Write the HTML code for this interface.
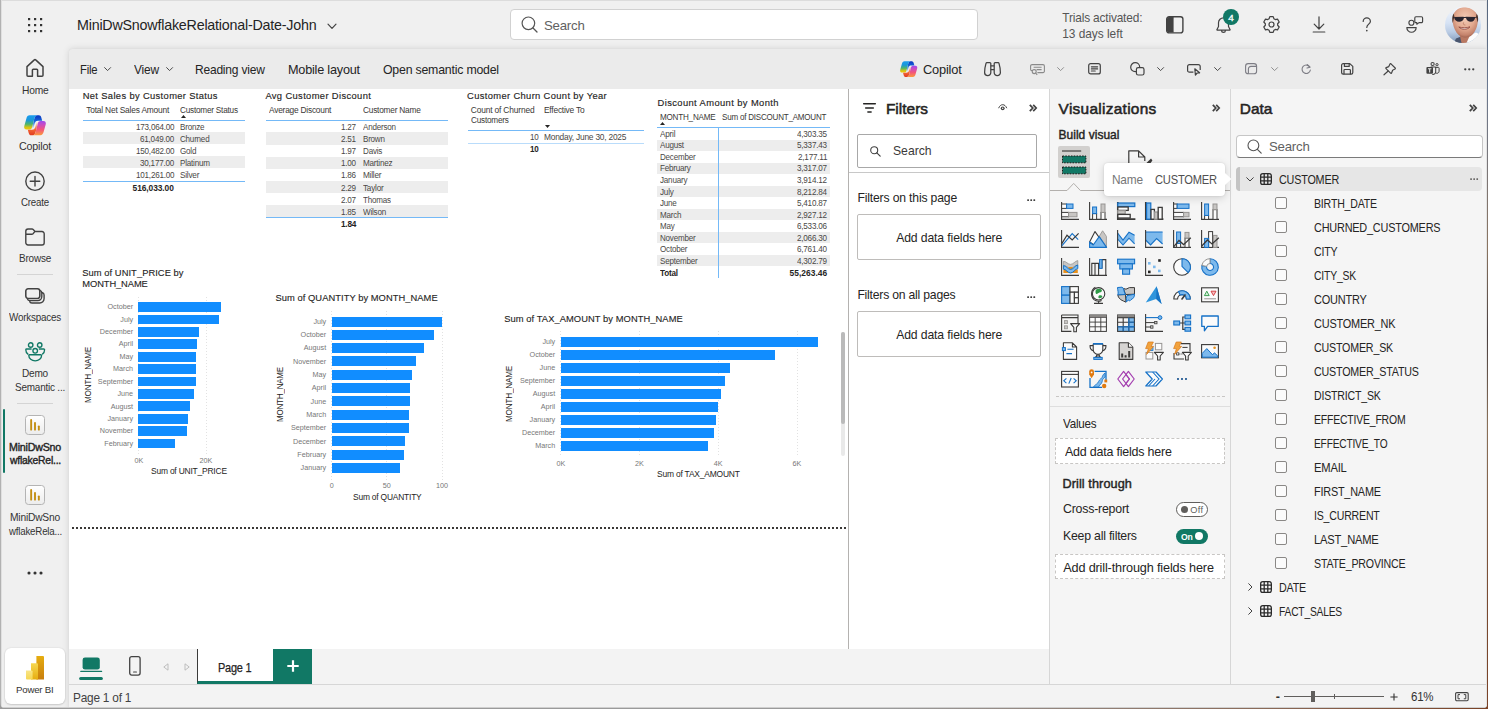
<!DOCTYPE html>
<html lang="en"><head><meta charset="utf-8"><title>Power BI</title>
<style>
*{box-sizing:border-box;margin:0;padding:0}
html,body{width:1488px;height:709px;overflow:hidden}
body{position:relative;background:#f0f0f0;font-family:"Liberation Sans","DejaVu Sans",sans-serif;color:#242424}
.abs{position:absolute}
svg{position:absolute;overflow:visible}

</style></head>
<body>
<!-- p_shell -->
<div class="abs" style="left:69px;top:49px;width:1419px;height:660px;background:#ebebeb;border-top-left-radius:3px;box-shadow:0 0 7px rgba(0,0,0,.13),0 0 1px rgba(0,0,0,.08)"></div>
<div class="abs" style="left:69px;top:89px;width:779px;height:559.7px;background:#fff"></div>
<div class="abs" style="left:847.9px;top:89px;width:1.3px;height:559.7px;background:#b4b2b0"></div>
<div class="abs" style="left:849px;top:89px;width:200px;height:559.7px;background:#fff"></div>
<div class="abs" style="left:1049px;top:89px;width:182px;height:595px;background:#f5f5f5;border-left:1px solid #d6d6d6;border-right:1px solid #d6d6d6"></div>
<div class="abs" style="left:1231px;top:89px;width:257px;height:595px;background:#f5f5f5"></div>
<div class="abs" style="left:69px;top:648.6px;width:980px;height:35.4px;background:#f3f3f3"></div>
<div class="abs" style="left:69px;top:684px;width:1419px;height:25px;background:#f3f3f3;border-top:1px solid #d6d6d6"></div>
<div class="abs" style="left:0;top:0;width:1488px;height:1px;background:#dcdcdc"></div>
<div class="abs" style="left:0;top:0;width:1px;height:709px;background:#b2b2b2"></div>
<div class="abs" style="left:1px;top:0;width:1px;height:709px;background:#e0e0e0"></div>
<div class="abs" style="left:1486px;top:0;width:1px;height:709px;background:#e4e4e4"></div>
<div class="abs" style="left:1487px;top:0;width:1px;height:709px;background:linear-gradient(to bottom,#56667c 0,#6a7890 12%,#8a7460 35%,#4a4040 47%,#8a7058 60%,#7a4a30 85%,#7a4226 100%)"></div>
<div class="abs" style="left:0;top:707px;width:1488px;height:1px;background:#cfcfcf"></div>
<div class="abs" style="left:0;top:708px;width:1488px;height:1px;background:linear-gradient(to right,#9a9a9a 0,#9a9a9a 60%,#8a6a58 85%,#7a4226 100%)"></div>
<!-- p_nav -->
<svg style="left:28px;top:18px" width="15" height="15" viewBox="0 0 15 15" ><rect x="0" y="0" width="2.2" height="2.2" fill="#333"/><rect x="0" y="6" width="2.2" height="2.2" fill="#333"/><rect x="0" y="12" width="2.2" height="2.2" fill="#333"/><rect x="6" y="0" width="2.2" height="2.2" fill="#333"/><rect x="6" y="6" width="2.2" height="2.2" fill="#333"/><rect x="6" y="12" width="2.2" height="2.2" fill="#333"/><rect x="12" y="0" width="2.2" height="2.2" fill="#333"/><rect x="12" y="6" width="2.2" height="2.2" fill="#333"/><rect x="12" y="12" width="2.2" height="2.2" fill="#333"/></svg>
<svg style="left:25px;top:58px" width="20" height="20" viewBox="0 0 20 20" ><path d="M2 8.6 L9.3 1.9 a1 1 0 0 1 1.4 0 L18 8.6 V17.2 a1 1 0 0 1 -1 1 H12.6 V12 a0.8 .8 0 0 0 -.8 -.8 H8.2 a.8 .8 0 0 0 -.8 .8 V18.2 H3 a1 1 0 0 1 -1 -1 Z" fill="none" stroke="#424242" stroke-width="1.5" stroke-linejoin="round"/></svg>
<span style="position:absolute;white-space:pre;left:21.75px;top:83.00px;font-size:10.72px;line-height:14px;color:#333;letter-spacing:-0.22px;transform:scaleX(0.9562);transform-origin:0 0;">Home</span>
<svg style="left:24px;top:114.7px" width="22" height="20.5" viewBox="0 0 22 20.5" ><defs><linearGradient id="cpa" x1="0" y1="0" x2="0" y2="1"><stop offset="0" stop-color="#1a9cf0"/><stop offset=".35" stop-color="#1a98d8"/><stop offset=".62" stop-color="#4fb56a"/><stop offset=".85" stop-color="#d8c412"/><stop offset="1" stop-color="#efc80a"/></linearGradient><linearGradient id="cpa2" x1="0" y1="0" x2="0" y2="1"><stop offset="0" stop-color="#0a34c0"/><stop offset=".45" stop-color="#1568dc"/><stop offset="1" stop-color="#ffffff"/></linearGradient><linearGradient id="cpb" x1="0" y1="0" x2="0" y2="1"><stop offset="0" stop-color="#fb9b3c"/><stop offset=".4" stop-color="#f3567a"/><stop offset=".75" stop-color="#c84cc4"/><stop offset="1" stop-color="#9d4af0"/></linearGradient><linearGradient id="cpb2" x1="0" y1="0" x2="0" y2="1"><stop offset="0" stop-color="#e03a20"/><stop offset=".45" stop-color="#f56a36"/><stop offset="1" stop-color="#ffffff"/></linearGradient></defs><path d="M10.3 3.8 C10.8 1.9 11.6 .2 13.4 .2 H14.8 C16.1 .2 16.9 1.1 17.3 2.5 L18.2 5.7 H14 C12.3 5.7 11.3 6.5 10.8 8.2 L9.4 13 C9.2 13.6 8.8 14.1 8.1 14.4 C8.4 13.8 8.4 13 8.1 12.3Z" fill="url(#cpa2)"/><path d="M5.6 .2 H13.4 C11.6 .4 10.8 1.9 10.3 3.8 L8.1 12.3 C7.7 13.9 6.8 14.6 5.4 14.6 H2.6 C.6 14.6 -.3 13.1 .3 11 L2.4 3.4 C2.9 1.4 3.9 .2 5.6 .2Z" fill="url(#cpa)"/><g transform="rotate(180 11 10.25)"><path d="M10.3 3.8 C10.8 1.9 11.6 .2 13.4 .2 H14.8 C16.1 .2 16.9 1.1 17.3 2.5 L18.2 5.7 H14 C12.3 5.7 11.3 6.5 10.8 8.2 L9.4 13 C9.2 13.6 8.8 14.1 8.1 14.4 C8.4 13.8 8.4 13 8.1 12.3Z" fill="url(#cpb2)"/><path d="M5.6 .2 H13.4 C11.6 .4 10.8 1.9 10.3 3.8 L8.1 12.3 C7.7 13.9 6.8 14.6 5.4 14.6 H2.6 C.6 14.6 -.3 13.1 .3 11 L2.4 3.4 C2.9 1.4 3.9 .2 5.6 .2Z" fill="url(#cpb)"/></g></svg>
<span style="position:absolute;white-space:pre;left:19.00px;top:139.00px;font-size:10.72px;line-height:14px;color:#333;letter-spacing:-0.196px;">Copilot</span>
<svg style="left:25px;top:171px" width="20" height="20" viewBox="0 0 20 20" ><circle cx="10" cy="10.2" r="9.2" fill="none" stroke="#424242" stroke-width="1.4"/><path d="M10 5.4 V15 M5.2 10.2 H14.8" stroke="#424242" stroke-width="1.4" stroke-linecap="round"/></svg>
<span style="position:absolute;white-space:pre;left:21.00px;top:195.00px;font-size:10.72px;line-height:14px;color:#333;letter-spacing:-0.22px;transform:scaleX(0.9071);transform-origin:0 0;">Create</span>
<svg style="left:25px;top:228px" width="20" height="18" viewBox="0 0 20 18" ><path d="M.8 3.2 a2.2 2.2 0 0 1 2.2 -2.2 H7 a1.6 1.6 0 0 1 1.2 .5 L9.6 3 a1.6 1.6 0 0 0 1.2 .5 H17 a2.2 2.2 0 0 1 2.2 2.2 V14.8 a2.2 2.2 0 0 1 -2.2 2.2 H3 a2.2 2.2 0 0 1 -2.2 -2.2 Z M.8 6.2 H6.8 a1.6 1.6 0 0 0 1.2 -.5 L9.8 3.6" fill="none" stroke="#424242" stroke-width="1.4" stroke-linejoin="round"/></svg>
<span style="position:absolute;white-space:pre;left:19.00px;top:251.00px;font-size:10.72px;line-height:14px;color:#333;letter-spacing:-0.22px;transform:scaleX(0.9294);transform-origin:0 0;">Browse</span>
<div class="abs" style="left:17px;top:274px;width:36px;height:1px;background:#d4d4d4"></div>
<svg style="left:25px;top:288px" width="21" height="16" viewBox="0 0 21 16" ><path d="M17.2 4.4 a2.6 2.6 0 0 1 1.9 2.5 V10.6 a4.4 4.4 0 0 1 -4.4 4.4 H7 a2.6 2.6 0 0 1 -2.5 -1.8 M15 2.4 a2.6 2.6 0 0 1 1.8 2.5 V8.6 a4 4 0 0 1 -4 4 H4.8 a2.6 2.6 0 0 1 -2.4 -1.6" fill="none" stroke="#424242" stroke-width="1.4"/><rect x=".8" y=".8" width="14" height="9.6" rx="2.3" fill="none" stroke="#424242" stroke-width="1.55"/></svg>
<span style="position:absolute;white-space:pre;left:9.00px;top:310.00px;font-size:10.72px;line-height:14px;color:#333;letter-spacing:-0.22px;transform:scaleX(0.9190);transform-origin:0 0;">Workspaces</span>
<svg style="left:25px;top:342px" width="21" height="20" viewBox="0 0 21 20" ><g fill="none" stroke="#117865" stroke-width="1.35"><circle cx="5.7" cy="3" r="2.25"/><circle cx="14.7" cy="3" r="2.25"/><circle cx="10.2" cy="8.8" r="2.3"/><path d="M4.6 12.7 h11.2 a.8 .8 0 0 1 .8 .8 a6.4 5.4 0 0 1 -12.8 0 a.8 .8 0 0 1 .8 -.8z"/><path d="M6.6 7 H1.6 a.8 .8 0 0 0 -.8 .8 a5.4 5.4 0 0 0 2.4 4.6 M13.8 7 H18.8 a.8 .8 0 0 1 .8 .8 a5.4 5.4 0 0 1 -2.4 4.6"/></g></svg>
<span style="position:absolute;white-space:pre;left:22.00px;top:366.00px;font-size:10.72px;line-height:14px;color:#333;letter-spacing:-0.22px;transform:scaleX(0.9382);transform-origin:0 0;">Demo</span>
<span style="position:absolute;white-space:pre;left:15.00px;top:380.00px;font-size:10.72px;line-height:14px;color:#333;letter-spacing:-0.22px;transform:scaleX(0.9267);transform-origin:0 0;">Semantic ...</span>
<div class="abs" style="left:17px;top:403px;width:36px;height:1px;background:#d4d4d4"></div>
<div class="abs" style="left:3px;top:409px;width:2.4px;height:64px;background:#117865;border-radius:1px"></div>
<svg style="left:25px;top:415px" width="20" height="20" viewBox="0 0 20 20" ><defs><linearGradient id="rg415" x1="0" y1="0" x2="0" y2="1"><stop offset="0" stop-color="#ffffff"/><stop offset="1" stop-color="#ececec"/></linearGradient></defs><rect x="0.5" y="0.5" width="19" height="19" rx="3" fill="url(#rg415)" stroke="#b4b4b4"/><rect x="5.2" y="4" width="1.9" height="11.6" rx=".9" fill="#c48f14"/><rect x="9.05" y="7" width="1.9" height="8.6" rx=".9" fill="#c48f14"/><rect x="12.9" y="10.4" width="1.9" height="5.2" rx=".9" fill="#c48f14"/></svg>
<span style="position:absolute;white-space:pre;left:9.00px;top:440.00px;font-size:10.72px;line-height:14px;-webkit-text-stroke:0.38px #242424;color:#242424;letter-spacing:-0.22px;transform:scaleX(0.9954);transform-origin:0 0;">MiniDwSno</span>
<span style="position:absolute;white-space:pre;left:9.50px;top:453.00px;font-size:10.72px;line-height:14px;-webkit-text-stroke:0.38px #242424;color:#242424;letter-spacing:-0.22px;transform:scaleX(0.9665);transform-origin:0 0;">wflakeRel...</span>
<svg style="left:25px;top:485px" width="20" height="20" viewBox="0 0 20 20" ><defs><linearGradient id="rg485" x1="0" y1="0" x2="0" y2="1"><stop offset="0" stop-color="#ffffff"/><stop offset="1" stop-color="#ececec"/></linearGradient></defs><rect x="0.5" y="0.5" width="19" height="19" rx="3" fill="url(#rg485)" stroke="#b4b4b4"/><rect x="5.2" y="4" width="1.9" height="11.6" rx=".9" fill="#c48f14"/><rect x="9.05" y="7" width="1.9" height="8.6" rx=".9" fill="#c48f14"/><rect x="12.9" y="10.4" width="1.9" height="5.2" rx=".9" fill="#c48f14"/></svg>
<span style="position:absolute;white-space:pre;left:10.00px;top:510.00px;font-size:10.72px;line-height:14px;color:#333;letter-spacing:-0.22px;transform:scaleX(0.9571);transform-origin:0 0;">MiniDwSno</span>
<span style="position:absolute;white-space:pre;left:8.50px;top:524.00px;font-size:10.72px;line-height:14px;color:#333;letter-spacing:-0.22px;transform:scaleX(0.9058);transform-origin:0 0;">wflakeRela...</span>
<svg style="left:27px;top:571px" width="16" height="4" viewBox="0 0 16 4" ><circle cx="2" cy="2" r="1.55" fill="#333"/><circle cx="8" cy="2" r="1.55" fill="#333"/><circle cx="14" cy="2" r="1.55" fill="#333"/></svg>
<div class="abs" style="left:5px;top:648px;width:60px;height:56px;background:#fff;border-radius:6px;box-shadow:0 0 2px rgba(0,0,0,.12),0 1px 2px rgba(0,0,0,.14)"></div>
<svg style="left:26px;top:656px" width="18" height="23.5" viewBox="0 0 18 23.5" ><defs><linearGradient id="pb1" x1="0" y1="0" x2="0" y2="1"><stop offset="0" stop-color="#e6ad10"/><stop offset="1" stop-color="#c87e0e"/></linearGradient><linearGradient id="pb2" x1="0" y1="0" x2="0" y2="1"><stop offset="0" stop-color="#f6d751"/><stop offset="1" stop-color="#e6ad10"/></linearGradient><linearGradient id="pb3" x1="0" y1="0" x2="0" y2="1"><stop offset="0" stop-color="#f9e589"/><stop offset="1" stop-color="#f6d751"/></linearGradient></defs><path d="M10.4 0 H17 a1 1 0 0 1 1 1 V23.5 H10.4z" fill="url(#pb1)"/><path d="M5 7.2 H11 a1 1 0 0 1 1 1 V23.5 H5z" fill="url(#pb2)"/><path d="M0 14.4 H5.6 a1 1 0 0 1 1 1 V23.5 H1 a1 1 0 0 1 -1 -1z" fill="url(#pb3)"/></svg>
<span style="position:absolute;white-space:pre;left:16.25px;top:683.00px;font-size:9.75px;line-height:13px;color:#333;letter-spacing:-0.22px;transform:scaleX(0.9920);transform-origin:0 0;">Power BI</span>
<!-- p_header -->
<span style="position:absolute;white-space:pre;left:77.30px;top:16.00px;font-size:14.33px;line-height:19px;color:#242424;letter-spacing:-0.22px;transform:scaleX(0.9980);transform-origin:0 0;">MiniDwSnowflakeRelational-Date-John</span>
<svg style="left:327px;top:22.5px" width="10" height="7" viewBox="0 0 10 7" ><path d="M1 1.2 L5 5.4 L9 1.2" fill="none" stroke="#424242" stroke-width="1.2" stroke-linecap="round" stroke-linejoin="round"/></svg>
<div class="abs" style="left:510px;top:9px;width:468px;height:31px;background:#fff;border:1px solid #d1d1d1;border-radius:4px"></div>
<svg style="left:521px;top:15.8px" width="17" height="17" viewBox="0 0 17 17" ><circle cx="7.4" cy="7.3" r="6.3" fill="none" stroke="#555" stroke-width="1.2"/><path d="M12 12 L16 16" stroke="#555" stroke-width="1.3" stroke-linecap="round"/></svg>
<span style="position:absolute;white-space:pre;left:544.40px;top:17.00px;font-size:13.65px;line-height:18px;color:#616161;letter-spacing:-0.22px;transform:scaleX(0.9686);transform-origin:0 0;">Search</span>
<span style="position:absolute;white-space:pre;left:1062.30px;top:11.00px;font-size:11.89px;line-height:15px;color:#555;letter-spacing:-0.160px;">Trials activated:</span>
<span style="position:absolute;white-space:pre;left:1062.30px;top:27.00px;font-size:11.89px;line-height:15px;color:#555;letter-spacing:-0.028px;">13 days left</span>
<svg style="left:1166.2px;top:16.2px" width="17.6" height="17.6" viewBox="0 0 17.6 17.6" ><rect x=".7" y=".7" width="16.2" height="16.2" rx="2.4" fill="none" stroke="#424242" stroke-width="1.4"/><path d="M1 3 a2 2 0 0 1 2 -2 H7.6 V16.6 H3 a2 2 0 0 1 -2 -2z" fill="#424242"/></svg>
<svg style="left:1215.6px;top:16.6px" width="15" height="17" viewBox="0 0 15 17" ><path d="M7.5 .8 a5 5 0 0 0 -5 5 V9.4 L1 12.4 a.5 .5 0 0 0 .45 .75 H13.55 a.5 .5 0 0 0 .45 -.75 L12.5 9.4 V5.8 a5 5 0 0 0 -5 -5z M5.6 13.4 a1.9 1.9 0 0 0 3.8 0" fill="none" stroke="#424242" stroke-width="1.2" stroke-linejoin="round"/></svg>
<div class="abs" style="left:1223.1px;top:9.2px;width:15.8px;height:15.8px;border-radius:50%;background:#117865"></div>
<span style="position:absolute;white-space:pre;left:1228.23px;top:11.00px;font-size:9.94px;line-height:13px;-webkit-text-stroke:0.35px #fff;color:#fff;">4</span>
<svg style="left:1262.5px;top:16.4px" width="17" height="17" viewBox="0 0 17 17" ><path d="M6.81 0.58 L10.19 0.58 L10.91 2.79 L12.24 3.55 L14.52 3.08 L16.20 6.00 L14.65 7.74 L14.65 9.26 L16.20 11.00 L14.52 13.92 L12.24 13.45 L10.91 14.21 L10.19 16.42 L6.81 16.42 L6.09 14.21 L4.76 13.45 L2.48 13.92 L0.80 11.00 L2.35 9.26 L2.35 7.74 L0.80 6.00 L2.48 3.08 L4.76 3.55 L6.09 2.79Z" fill="none" stroke="#424242" stroke-width="1.2" stroke-linejoin="round"/><circle cx="8.5" cy="8.5" r="2.5" fill="none" stroke="#424242" stroke-width="1.2"/></svg>
<svg style="left:1312px;top:16.4px" width="14" height="17" viewBox="0 0 14 17" ><path d="M7 .8 V12.6 M2.2 8.2 L7 13 L11.8 8.2 M1.2 16 H12.8" fill="none" stroke="#424242" stroke-width="1.2" stroke-linecap="round" stroke-linejoin="round"/></svg>
<svg style="left:1362.4px;top:17.4px" width="10" height="15" viewBox="0 0 10 15" ><path d="M1.2 4.4 a3.6 3.6 0 0 1 7.2 0 c0 2.6 -3.6 3 -3.6 6" fill="none" stroke="#424242" stroke-width="1.2" stroke-linecap="round"/><circle cx="4.8" cy="13.6" r=".85" fill="#424242"/></svg>
<svg style="left:1406.4px;top:16.4px" width="18" height="17.4" viewBox="0 0 18 17.4" ><g fill="none" stroke="#424242" stroke-width="1.15" stroke-linejoin="round"><circle cx="5.4" cy="6.8" r="2.5"/><path d="M.8 11.6 H10.2 a4.7 4.7 0 0 1 -9.4 0z"/><path d="M10 .8 H15.4 a1.2 1.2 0 0 1 1.2 1.2 V5.4 a1.2 1.2 0 0 1 -1.2 1.2 H13 L10.8 8.2 V6.6 H10 A1.2 1.2 0 0 1 8.8 5.4 V2 A1.2 1.2 0 0 1 10 .8z"/></g></svg>
<svg style="left:1445px;top:6.9px" width="36" height="36" viewBox="0 0 36 36" ><defs><clipPath id="avc"><circle cx="18" cy="18" r="18"/></clipPath><linearGradient id="avbg" x1="0" y1="0" x2="0" y2="1"><stop offset="0" stop-color="#f2f5fb"/><stop offset=".45" stop-color="#d5e2f4"/><stop offset=".7" stop-color="#b9cbe4"/><stop offset="1" stop-color="#8098b8"/></linearGradient><radialGradient id="avsk" cx=".5" cy=".36" r=".66"><stop offset="0" stop-color="#f3cbb6"/><stop offset=".55" stop-color="#e2a990"/><stop offset=".85" stop-color="#c4836c"/><stop offset="1" stop-color="#9a5c4a"/></radialGradient></defs><g clip-path="url(#avc)"><rect width="36" height="36" fill="url(#avbg)"/><path d="M9 36 L11 31.5 L16 29.5 L18 36z" fill="#4a566e"/><path d="M17 36 L21 30 L31 25.5 L36 28 V36z" fill="#fcfcfc"/><path d="M14.5 27 L16.5 36 L21.5 36 L25.5 27z" fill="#b87862"/><path d="M20.2 .3 C27 .3 33 5 32.9 12 C32.9 19 30.5 24.5 27.5 27.5 C25 30 22.5 30.7 19.6 30.5 C16.5 30.3 13.5 28.5 11.5 25.5 C9 21.5 7.5 17 7.5 12 C7.5 5 13 .3 20.2 .3Z" fill="url(#avsk)"/><path d="M8.6 6.6 C7 9.4 7 13.4 7.8 16 L9.4 9.4z M31.8 6.6 C33.4 9.4 33.4 13 32.8 15.4 L31 9.4z" fill="#4a342e"/><path d="M9 10 L18.4 9.7 C19 9.7 19 10.5 18.8 11.6 C18.4 13.7 16.8 14.7 14.2 14.7 C11.4 14.7 9.6 13.4 9 10z M20.6 9.7 L30.2 10 C30 13.2 28.4 14.7 25.8 14.7 C23.4 14.7 21.6 13.7 21.2 11.6 C21 10.5 20.4 9.7 20.6 9.7z M18.4 10 h2.6 v1 h-2.6z M7.6 10.6 L9 10 v1.1z M32.8 10.6 L30.2 10 v1.1z" fill="#2a2530"/><path d="M18.6 15.4 C18 17 18.4 18 20.4 18" stroke="#b9785f" stroke-width=".8" fill="none"/><path d="M13.8 20 C16.6 23 22.6 23 25 19.8 C22.4 21 16.8 21 13.8 20z" fill="#f6ecea" stroke="#8a3c34" stroke-width=".8" stroke-linejoin="round"/></g></svg>
<!-- p_toolbar -->
<span style="position:absolute;white-space:pre;left:80.20px;top:61.00px;font-size:13.16px;line-height:17px;color:#242424;letter-spacing:-0.22px;transform:scaleX(0.8562);transform-origin:0 0;">File</span>
<svg style="left:104.4px;top:67.3px" width="7.2" height="4.4" viewBox="0 0 7.2 4.4" ><path d="M.6 .6 L3.6 3.6 L6.6 .6" fill="none" stroke="#424242" stroke-width=".95" stroke-linecap="round" stroke-linejoin="round"/></svg>
<span style="position:absolute;white-space:pre;left:134.30px;top:61.00px;font-size:13.16px;line-height:17px;color:#242424;letter-spacing:-0.22px;transform:scaleX(0.9051);transform-origin:0 0;">View</span>
<svg style="left:165.6px;top:67.3px" width="7.2" height="4.4" viewBox="0 0 7.2 4.4" ><path d="M.6 .6 L3.6 3.6 L6.6 .6" fill="none" stroke="#424242" stroke-width=".95" stroke-linecap="round" stroke-linejoin="round"/></svg>
<span style="position:absolute;white-space:pre;left:195.40px;top:61.00px;font-size:13.16px;line-height:17px;color:#242424;letter-spacing:-0.22px;transform:scaleX(0.9117);transform-origin:0 0;">Reading view</span>
<span style="position:absolute;white-space:pre;left:287.80px;top:61.00px;font-size:13.16px;line-height:17px;color:#242424;letter-spacing:-0.22px;transform:scaleX(0.9629);transform-origin:0 0;">Mobile layout</span>
<span style="position:absolute;white-space:pre;left:382.60px;top:61.00px;font-size:13.16px;line-height:17px;color:#242424;letter-spacing:-0.22px;transform:scaleX(0.9362);transform-origin:0 0;">Open semantic model</span>
<svg style="left:899.5px;top:61.3px" width="17.4" height="16.21" viewBox="0 0 22 20.5"><path d="M10.3 3.8 C10.8 1.9 11.6 .2 13.4 .2 H14.8 C16.1 .2 16.9 1.1 17.3 2.5 L18.2 5.7 H14 C12.3 5.7 11.3 6.5 10.8 8.2 L9.4 13 C9.2 13.6 8.8 14.1 8.1 14.4 C8.4 13.8 8.4 13 8.1 12.3Z" fill="url(#cpa2)"/><path d="M5.6 .2 H13.4 C11.6 .4 10.8 1.9 10.3 3.8 L8.1 12.3 C7.7 13.9 6.8 14.6 5.4 14.6 H2.6 C.6 14.6 -.3 13.1 .3 11 L2.4 3.4 C2.9 1.4 3.9 .2 5.6 .2Z" fill="url(#cpa)"/><g transform="rotate(180 11 10.25)"><path d="M10.3 3.8 C10.8 1.9 11.6 .2 13.4 .2 H14.8 C16.1 .2 16.9 1.1 17.3 2.5 L18.2 5.7 H14 C12.3 5.7 11.3 6.5 10.8 8.2 L9.4 13 C9.2 13.6 8.8 14.1 8.1 14.4 C8.4 13.8 8.4 13 8.1 12.3Z" fill="url(#cpb2)"/><path d="M5.6 .2 H13.4 C11.6 .4 10.8 1.9 10.3 3.8 L8.1 12.3 C7.7 13.9 6.8 14.6 5.4 14.6 H2.6 C.6 14.6 -.3 13.1 .3 11 L2.4 3.4 C2.9 1.4 3.9 .2 5.6 .2Z" fill="url(#cpb)"/></g></svg>
<span style="position:absolute;white-space:pre;left:922.50px;top:61.00px;font-size:13.16px;line-height:17px;color:#242424;letter-spacing:-0.22px;transform:scaleX(0.9768);transform-origin:0 0;">Copilot</span>
<svg style="left:983.6px;top:61.8px" width="17" height="14.6" viewBox="0 0 17 14.6" ><g fill="none" stroke="#424242" stroke-width="1.25" stroke-linejoin="round"><path d="M2.9 .7 H5.9 a.9 .9 0 0 1 .9 .9 V10.6 a3.1 3.1 0 1 1 -6.2 0 C.6 7 1.2 4 2 1.4 a1 1 0 0 1 .9 -.7z"/><path d="M14.1 .7 H11.1 a.9 .9 0 0 0 -.9 .9 V10.6 a3.1 3.1 0 1 0 6.2 0 C16.4 7 15.8 4 15 1.4 a1 1 0 0 0 -.9 -.7z"/><path d="M6.8 4 H10.2 M6.8 7.6 H10.2"/></g></svg>
<svg style="left:1029.6px;top:64px" width="15" height="11.4" viewBox="0 0 15 11.4" ><g fill="none" stroke="#8a8a8a" stroke-width="1.1" stroke-linejoin="round"><path d="M2.2 6.6 H2 A1.4 1.4 0 0 1 .6 5.2 V2 A1.4 1.4 0 0 1 2 .6 H13 a1.4 1.4 0 0 1 1.4 1.4 V7.2 A1.4 1.4 0 0 1 13 8.6 H7.4"/><path d="M3.6 3.2 H11.6 M6.6 5.6 H11.6"/><circle cx="4.2" cy="7.6" r="2"/><path d="M5.7 9.1 L7.2 10.8"/></g></svg>
<svg style="left:1057.4px;top:67.3px" width="7.2" height="4.4" viewBox="0 0 7.2 4.4" ><path d="M.6 .6 L3.6 3.6 L6.6 .6" fill="none" stroke="#8a8a8a" stroke-width=".95" stroke-linecap="round" stroke-linejoin="round"/></svg>
<svg style="left:1087.5px;top:63.4px" width="13" height="11.6" viewBox="0 0 13 11.6" ><g fill="none" stroke="#424242" stroke-width="1.2" stroke-linecap="round"><rect x=".7" y=".7" width="11.6" height="10.2" rx="2"/><path d="M3.4 3.8 H9.6 M3.4 5.9 H9.6 M3.4 8 H7.2"/></g></svg>
<svg style="left:1129.8px;top:62.4px" width="14.8" height="13.6" viewBox="0 0 14.8 13.6" ><g fill="none" stroke="#424242" stroke-width="1.2"><circle cx="5.2" cy="5.2" r="4.5"/><rect x="6.4" y="5.6" width="7.6" height="7.4" rx="1.8" fill="#ebebeb"/></g></svg>
<svg style="left:1157.4px;top:67.3px" width="7.2" height="4.4" viewBox="0 0 7.2 4.4" ><path d="M.6 .6 L3.6 3.6 L6.6 .6" fill="none" stroke="#424242" stroke-width=".95" stroke-linecap="round" stroke-linejoin="round"/></svg>
<svg style="left:1187px;top:64px" width="14" height="11.6" viewBox="0 0 14 11.6" ><g fill="none" stroke="#424242" stroke-width="1.2" stroke-linejoin="round"><path d="M6.4 8.2 H2.4 A1.8 1.8 0 0 1 .6 6.4 V2.4 A1.8 1.8 0 0 1 2.4 .6 H11.4 a1.8 1.8 0 0 1 1.8 1.8 V6"/><path d="M7.8 4.8 L12.6 8.8 L10.2 9 L8.4 11z" fill="#ebebeb"/></g></svg>
<svg style="left:1214.4px;top:67.3px" width="7.2" height="4.4" viewBox="0 0 7.2 4.4" ><path d="M.6 .6 L3.6 3.6 L6.6 .6" fill="none" stroke="#424242" stroke-width=".95" stroke-linecap="round" stroke-linejoin="round"/></svg>
<svg style="left:1245px;top:63.4px" width="12.2" height="11.4" viewBox="0 0 12.2 11.4" ><g fill="none" stroke="#7c7c84" stroke-width="1.1"><rect x=".6" y=".6" width="11" height="10.2" rx="2.6"/><path d="M3.4 10.8 V6 a2.6 2.6 0 0 1 2.6 -2.6 H11.6"/></g></svg>
<svg style="left:1271.2px;top:67.3px" width="7.2" height="4.4" viewBox="0 0 7.2 4.4" ><path d="M.6 .6 L3.6 3.6 L6.6 .6" fill="none" stroke="#8a8a8a" stroke-width=".95" stroke-linecap="round" stroke-linejoin="round"/></svg>
<svg style="left:1300.8px;top:64.2px" width="10.4" height="9.8" viewBox="0 0 10.4 9.8" ><g fill="none" stroke="#7c7c84" stroke-width="1.1" stroke-linecap="round" stroke-linejoin="round"><path d="M8.8 3 A4.2 4.2 0 1 0 9.4 6"/><path d="M6.4 .6 L9 3.2 L6 4"/></g></svg>
<svg style="left:1340.8px;top:63px" width="12.4" height="11.8" viewBox="0 0 12.4 11.8" ><g fill="none" stroke="#424242" stroke-width="1.2" stroke-linejoin="round"><path d="M2.2 .6 H8.8 L11.8 3.4 V9.6 a1.6 1.6 0 0 1 -1.6 1.6 H2.2 A1.6 1.6 0 0 1 .6 9.6 V2.2 A1.6 1.6 0 0 1 2.2 .6z"/><path d="M3.4 .6 V3.4 H8.2 V.6 M3 11.2 V7.2 a.7 .7 0 0 1 .7 -.7 H8.7 a.7 .7 0 0 1 .7 .7 V11.2"/></g></svg>
<svg style="left:1383.4px;top:62.8px" width="13.2" height="12.4" viewBox="0 0 13.2 12.4" ><g fill="none" stroke="#424242" stroke-width="1.15" stroke-linejoin="round" stroke-linecap="round"><path d="M8 .8 L12.2 5 a.7 .7 0 0 1 -.2 1.1 L9.6 7.2 L8.6 10 a.6 .6 0 0 1 -1 .2 L3 5.6 a.6 .6 0 0 1 .2 -1 L5.8 3.6 L7 .9 a.7 .7 0 0 1 1 -.1z"/><path d="M5.2 8 L1 11.8"/></g></svg>
<svg style="left:1425.8px;top:62px" width="13.6" height="12.8" viewBox="0 0 13.6 12.8" ><circle cx="6.6" cy="2" r="1.6" fill="none" stroke="#424242" stroke-width="1.05"/><circle cx="11" cy="2.7" r="1.15" fill="none" stroke="#424242" stroke-width="1"/><path d="M9.6 5.4 H12.4 a.7 .7 0 0 1 .7 .7 V9.2 a2.1 2.1 0 0 1 -3 1.9" fill="none" stroke="#424242" stroke-width="1"/><path d="M4.6 5 H9 a.7 .7 0 0 1 .7 .7 V9.8 a2.7 2.7 0 0 1 -3.4 2.6" fill="none" stroke="#424242" stroke-width="1.05"/><rect x=".4" y="5" width="6.6" height="6.8" rx="1" fill="#424242"/><path d="M2 6.8 H5.4 M3.7 6.8 V10.4" stroke="#ebebeb" stroke-width="1.05"/></svg>
<svg style="left:1464px;top:67.9px" width="11" height="2.6" viewBox="0 0 11 2.6" ><circle cx="1.25" cy="1.3" r="1.15" fill="#424242"/><circle cx="5.25" cy="1.3" r="1.15" fill="#424242"/><circle cx="9.25" cy="1.3" r="1.15" fill="#424242"/></svg>
<!-- p_canvas -->
<span style="position:absolute;white-space:pre;left:82.70px;top:90.00px;font-size:9.36px;line-height:12px;color:#252423;letter-spacing:0.359px;-webkit-text-stroke:.15px #252423;">Net Sales by Customer Status</span>
<span style="position:absolute;white-space:pre;left:86.20px;top:105.00px;font-size:8.38px;line-height:11px;color:#3a3836;letter-spacing:-0.185px;">Total Net Sales Amount</span>
<span style="position:absolute;white-space:pre;left:180.20px;top:105.00px;font-size:8.38px;line-height:11px;color:#3a3836;letter-spacing:-0.22px;transform:scaleX(0.9784);transform-origin:0 0;">Customer Status</span>
<svg style="left:180.6px;top:115.2px" width="5" height="3" viewBox="0 0 5 3" ><path d="M0 3 L2.5 0 L5 3z" fill="#252423"/></svg>
<div class="abs" style="left:83px;top:120.3px;width:162px;height:1px;background:#74b9f7"></div>
<span class="n" style="position:absolute;white-space:pre;left:135.84px;top:122.00px;font-size:8.38px;line-height:11px;color:#4a4846;letter-spacing:-0.22px;transform:scaleX(0.9657);transform-origin:0 0;">173,064.00</span>
<span style="position:absolute;white-space:pre;left:180.20px;top:122.00px;font-size:8.38px;line-height:11px;color:#4a4846;letter-spacing:-0.22px;transform:scaleX(0.9629);transform-origin:0 0;">Bronze</span>
<div class="abs" style="left:83.00px;top:132.30px;width:162.00px;height:12.00px;background:#ededed"></div>
<span class="n" style="position:absolute;white-space:pre;left:140.10px;top:134.00px;font-size:8.38px;line-height:11px;color:#4a4846;letter-spacing:-0.22px;transform:scaleX(0.9663);transform-origin:0 0;">61,049.00</span>
<span style="position:absolute;white-space:pre;left:180.20px;top:134.00px;font-size:8.38px;line-height:11px;color:#4a4846;letter-spacing:-0.22px;transform:scaleX(0.9610);transform-origin:0 0;">Churned</span>
<span class="n" style="position:absolute;white-space:pre;left:135.84px;top:146.00px;font-size:8.38px;line-height:11px;color:#4a4846;letter-spacing:-0.22px;transform:scaleX(0.9657);transform-origin:0 0;">150,482.00</span>
<span style="position:absolute;white-space:pre;left:180.20px;top:146.00px;font-size:8.38px;line-height:11px;color:#4a4846;letter-spacing:-0.22px;transform:scaleX(0.9629);transform-origin:0 0;">Gold</span>
<div class="abs" style="left:83.00px;top:156.30px;width:162.00px;height:12.00px;background:#ededed"></div>
<span class="n" style="position:absolute;white-space:pre;left:140.10px;top:158.00px;font-size:8.38px;line-height:11px;color:#4a4846;letter-spacing:-0.22px;transform:scaleX(0.9663);transform-origin:0 0;">30,177.00</span>
<span style="position:absolute;white-space:pre;left:180.20px;top:158.00px;font-size:8.38px;line-height:11px;color:#4a4846;letter-spacing:-0.22px;transform:scaleX(0.9672);transform-origin:0 0;">Platinum</span>
<span class="n" style="position:absolute;white-space:pre;left:135.84px;top:170.00px;font-size:8.38px;line-height:11px;color:#4a4846;letter-spacing:-0.22px;transform:scaleX(0.9657);transform-origin:0 0;">101,261.00</span>
<span style="position:absolute;white-space:pre;left:180.20px;top:170.00px;font-size:8.38px;line-height:11px;color:#4a4846;letter-spacing:-0.22px;transform:scaleX(0.9765);transform-origin:0 0;">Silver</span>
<div class="abs" style="left:83px;top:181px;width:162px;height:1px;background:#74b9f7"></div>
<span class="n" style="position:absolute;white-space:pre;left:132.60px;top:183.00px;font-size:8.38px;line-height:11px;font-weight:700;color:#252423;letter-spacing:-0.072px;">516,033.00</span>
<span style="position:absolute;white-space:pre;left:265.40px;top:90.00px;font-size:9.36px;line-height:12px;color:#252423;letter-spacing:0.372px;-webkit-text-stroke:.15px #252423;">Avg Customer Discount</span>
<span style="position:absolute;white-space:pre;left:269.00px;top:105.00px;font-size:8.38px;line-height:11px;color:#3a3836;letter-spacing:-0.22px;transform:scaleX(0.9963);transform-origin:0 0;">Average Discount</span>
<span style="position:absolute;white-space:pre;left:362.80px;top:105.00px;font-size:8.38px;line-height:11px;color:#3a3836;letter-spacing:-0.22px;transform:scaleX(0.9912);transform-origin:0 0;">Customer Name</span>
<div class="abs" style="left:266px;top:120.3px;width:182px;height:1px;background:#74b9f7"></div>
<span class="n" style="position:absolute;white-space:pre;left:341.47px;top:122.00px;font-size:8.38px;line-height:11px;color:#4a4846;letter-spacing:-0.22px;transform:scaleX(0.9672);transform-origin:0 0;">1.27</span>
<span style="position:absolute;white-space:pre;left:362.80px;top:122.00px;font-size:8.38px;line-height:11px;color:#4a4846;letter-spacing:-0.22px;transform:scaleX(0.9622);transform-origin:0 0;">Anderson</span>
<div class="abs" style="left:266.00px;top:132.42px;width:182.00px;height:12.10px;background:#ededed"></div>
<span class="n" style="position:absolute;white-space:pre;left:341.47px;top:134.00px;font-size:8.38px;line-height:11px;color:#4a4846;letter-spacing:-0.22px;transform:scaleX(0.9672);transform-origin:0 0;">2.51</span>
<span style="position:absolute;white-space:pre;left:362.80px;top:134.00px;font-size:8.38px;line-height:11px;color:#4a4846;letter-spacing:-0.22px;transform:scaleX(0.9594);transform-origin:0 0;">Brown</span>
<span class="n" style="position:absolute;white-space:pre;left:341.47px;top:146.00px;font-size:8.38px;line-height:11px;color:#4a4846;letter-spacing:-0.22px;transform:scaleX(0.9672);transform-origin:0 0;">1.97</span>
<span style="position:absolute;white-space:pre;left:362.80px;top:146.00px;font-size:8.38px;line-height:11px;color:#4a4846;letter-spacing:-0.22px;transform:scaleX(0.9657);transform-origin:0 0;">Davis</span>
<div class="abs" style="left:266.00px;top:156.66px;width:182.00px;height:12.10px;background:#ededed"></div>
<span class="n" style="position:absolute;white-space:pre;left:341.47px;top:158.00px;font-size:8.38px;line-height:11px;color:#4a4846;letter-spacing:-0.22px;transform:scaleX(0.9672);transform-origin:0 0;">1.00</span>
<span style="position:absolute;white-space:pre;left:362.80px;top:158.00px;font-size:8.38px;line-height:11px;color:#4a4846;letter-spacing:-0.22px;transform:scaleX(0.9680);transform-origin:0 0;">Martinez</span>
<span class="n" style="position:absolute;white-space:pre;left:341.47px;top:170.00px;font-size:8.38px;line-height:11px;color:#4a4846;letter-spacing:-0.22px;transform:scaleX(0.9672);transform-origin:0 0;">1.86</span>
<span style="position:absolute;white-space:pre;left:362.80px;top:170.00px;font-size:8.38px;line-height:11px;color:#4a4846;letter-spacing:-0.22px;transform:scaleX(0.9796);transform-origin:0 0;">Miller</span>
<div class="abs" style="left:266.00px;top:180.90px;width:182.00px;height:12.10px;background:#ededed"></div>
<span class="n" style="position:absolute;white-space:pre;left:341.47px;top:183.00px;font-size:8.38px;line-height:11px;color:#4a4846;letter-spacing:-0.22px;transform:scaleX(0.9672);transform-origin:0 0;">2.29</span>
<span style="position:absolute;white-space:pre;left:362.80px;top:183.00px;font-size:8.38px;line-height:11px;color:#4a4846;letter-spacing:-0.22px;transform:scaleX(0.9724);transform-origin:0 0;">Taylor</span>
<span class="n" style="position:absolute;white-space:pre;left:341.47px;top:195.00px;font-size:8.38px;line-height:11px;color:#4a4846;letter-spacing:-0.22px;transform:scaleX(0.9672);transform-origin:0 0;">2.07</span>
<span style="position:absolute;white-space:pre;left:362.80px;top:195.00px;font-size:8.38px;line-height:11px;color:#4a4846;letter-spacing:-0.22px;transform:scaleX(0.9567);transform-origin:0 0;">Thomas</span>
<div class="abs" style="left:266.00px;top:205.14px;width:182.00px;height:12.10px;background:#ededed"></div>
<span class="n" style="position:absolute;white-space:pre;left:341.47px;top:207.00px;font-size:8.38px;line-height:11px;color:#4a4846;letter-spacing:-0.22px;transform:scaleX(0.9672);transform-origin:0 0;">1.85</span>
<span style="position:absolute;white-space:pre;left:362.80px;top:207.00px;font-size:8.38px;line-height:11px;color:#4a4846;letter-spacing:-0.22px;transform:scaleX(0.9657);transform-origin:0 0;">Wilson</span>
<div class="abs" style="left:266px;top:217.3px;width:182px;height:1px;background:#74b9f7"></div>
<span class="n" style="position:absolute;white-space:pre;left:341.20px;top:219.00px;font-size:8.38px;line-height:11px;font-weight:700;color:#252423;letter-spacing:-0.22px;transform:scaleX(0.9849);transform-origin:0 0;">1.84</span>
<span style="position:absolute;white-space:pre;left:467.10px;top:90.00px;font-size:9.36px;line-height:12px;color:#252423;letter-spacing:0.359px;-webkit-text-stroke:.15px #252423;">Customer Churn Count by Year</span>
<span style="position:absolute;white-space:pre;left:470.80px;top:105.00px;font-size:8.38px;line-height:11px;color:#3a3836;letter-spacing:-0.158px;">Count of Churned</span>
<span style="position:absolute;white-space:pre;left:470.80px;top:115.00px;font-size:8.38px;line-height:11px;color:#3a3836;letter-spacing:-0.22px;transform:scaleX(0.9761);transform-origin:0 0;">Customers</span>
<span style="position:absolute;white-space:pre;left:544.00px;top:105.00px;font-size:8.38px;line-height:11px;color:#3a3836;letter-spacing:-0.217px;">Effective To</span>
<svg style="left:544.8px;top:125.4px" width="5" height="3" viewBox="0 0 5 3" ><path d="M0 0 L2.5 3 L5 0z" fill="#252423"/></svg>
<div class="abs" style="left:468px;top:129.8px;width:175.60000000000002px;height:1px;background:#74b9f7"></div>
<span class="n" style="position:absolute;white-space:pre;left:529.66px;top:132.00px;font-size:8.38px;line-height:11px;color:#4a4846;letter-spacing:-0.22px;transform:scaleX(0.9603);transform-origin:0 0;">10</span>
<span style="position:absolute;white-space:pre;left:544.00px;top:132.00px;font-size:8.38px;line-height:11px;color:#4a4846;letter-spacing:-0.22px;transform:scaleX(0.9988);transform-origin:0 0;">Monday, June 30, 2025</span>
<div class="abs" style="left:468px;top:143.2px;width:175.60000000000002px;height:1px;background:#b9dcfb"></div>
<span class="n" style="position:absolute;white-space:pre;left:529.66px;top:144.00px;font-size:8.38px;line-height:11px;font-weight:700;color:#252423;letter-spacing:-0.22px;transform:scaleX(0.9603);transform-origin:0 0;">10</span>
<span style="position:absolute;white-space:pre;left:657.50px;top:97.00px;font-size:9.36px;line-height:12px;color:#252423;letter-spacing:0.405px;-webkit-text-stroke:.15px #252423;">Discount Amount by Month</span>
<span style="position:absolute;white-space:pre;left:660.00px;top:112.00px;font-size:8.38px;line-height:11px;color:#3a3836;letter-spacing:-0.22px;transform:scaleX(0.9658);transform-origin:0 0;">MONTH_NAME</span>
<span style="position:absolute;white-space:pre;left:722.40px;top:112.00px;font-size:8.38px;line-height:11px;color:#3a3836;letter-spacing:-0.22px;transform:scaleX(0.9585);transform-origin:0 0;">Sum of DISCOUNT_AMOUNT</span>
<svg style="left:660.2px;top:121.8px" width="5" height="3" viewBox="0 0 5 3" ><path d="M0 3 L2.5 0 L5 3z" fill="#252423"/></svg>
<div class="abs" style="left:657px;top:127.2px;width:173px;height:1px;background:#74b9f7"></div>
<span style="position:absolute;white-space:pre;left:660.00px;top:129.00px;font-size:8.38px;line-height:11px;color:#4a4846;letter-spacing:-0.22px;transform:scaleX(0.9792);transform-origin:0 0;">April</span>
<span class="n" style="position:absolute;white-space:pre;left:797.36px;top:129.00px;font-size:8.38px;line-height:11px;color:#4a4846;letter-spacing:-0.22px;transform:scaleX(0.9672);transform-origin:0 0;">4,303.35</span>
<div class="abs" style="left:657.00px;top:139.55px;width:173.00px;height:11.30px;background:#ededed"></div>
<span style="position:absolute;white-space:pre;left:660.00px;top:140.00px;font-size:8.38px;line-height:11px;color:#4a4846;letter-spacing:-0.22px;transform:scaleX(0.9638);transform-origin:0 0;">August</span>
<span class="n" style="position:absolute;white-space:pre;left:797.36px;top:140.00px;font-size:8.38px;line-height:11px;color:#4a4846;letter-spacing:-0.22px;transform:scaleX(0.9672);transform-origin:0 0;">5,337.43</span>
<span style="position:absolute;white-space:pre;left:660.00px;top:152.00px;font-size:8.38px;line-height:11px;color:#4a4846;letter-spacing:-0.22px;transform:scaleX(0.9587);transform-origin:0 0;">December</span>
<span class="n" style="position:absolute;white-space:pre;left:797.93px;top:152.00px;font-size:8.38px;line-height:11px;color:#4a4846;letter-spacing:-0.22px;transform:scaleX(0.9683);transform-origin:0 0;">2,177.11</span>
<div class="abs" style="left:657.00px;top:162.65px;width:173.00px;height:11.30px;background:#ededed"></div>
<span style="position:absolute;white-space:pre;left:660.00px;top:163.00px;font-size:8.38px;line-height:11px;color:#4a4846;letter-spacing:-0.22px;transform:scaleX(0.9657);transform-origin:0 0;">February</span>
<span class="n" style="position:absolute;white-space:pre;left:797.36px;top:163.00px;font-size:8.38px;line-height:11px;color:#4a4846;letter-spacing:-0.22px;transform:scaleX(0.9672);transform-origin:0 0;">3,317.07</span>
<span style="position:absolute;white-space:pre;left:660.00px;top:175.00px;font-size:8.38px;line-height:11px;color:#4a4846;letter-spacing:-0.22px;transform:scaleX(0.9649);transform-origin:0 0;">January</span>
<span class="n" style="position:absolute;white-space:pre;left:797.36px;top:175.00px;font-size:8.38px;line-height:11px;color:#4a4846;letter-spacing:-0.22px;transform:scaleX(0.9672);transform-origin:0 0;">3,914.12</span>
<div class="abs" style="left:657.00px;top:185.75px;width:173.00px;height:11.30px;background:#ededed"></div>
<span style="position:absolute;white-space:pre;left:660.00px;top:187.00px;font-size:8.38px;line-height:11px;color:#4a4846;letter-spacing:-0.22px;transform:scaleX(0.9724);transform-origin:0 0;">July</span>
<span class="n" style="position:absolute;white-space:pre;left:797.36px;top:187.00px;font-size:8.38px;line-height:11px;color:#4a4846;letter-spacing:-0.22px;transform:scaleX(0.9672);transform-origin:0 0;">8,212.84</span>
<span style="position:absolute;white-space:pre;left:660.00px;top:198.00px;font-size:8.38px;line-height:11px;color:#4a4846;letter-spacing:-0.22px;transform:scaleX(0.9616);transform-origin:0 0;">June</span>
<span class="n" style="position:absolute;white-space:pre;left:797.36px;top:198.00px;font-size:8.38px;line-height:11px;color:#4a4846;letter-spacing:-0.22px;transform:scaleX(0.9672);transform-origin:0 0;">5,410.87</span>
<div class="abs" style="left:657.00px;top:208.85px;width:173.00px;height:11.30px;background:#ededed"></div>
<span style="position:absolute;white-space:pre;left:660.00px;top:210.00px;font-size:8.38px;line-height:11px;color:#4a4846;letter-spacing:-0.22px;transform:scaleX(0.9604);transform-origin:0 0;">March</span>
<span class="n" style="position:absolute;white-space:pre;left:797.36px;top:210.00px;font-size:8.38px;line-height:11px;color:#4a4846;letter-spacing:-0.22px;transform:scaleX(0.9672);transform-origin:0 0;">2,927.12</span>
<span style="position:absolute;white-space:pre;left:660.00px;top:221.00px;font-size:8.38px;line-height:11px;color:#4a4846;letter-spacing:-0.22px;transform:scaleX(0.9548);transform-origin:0 0;">May</span>
<span class="n" style="position:absolute;white-space:pre;left:797.36px;top:221.00px;font-size:8.38px;line-height:11px;color:#4a4846;letter-spacing:-0.22px;transform:scaleX(0.9672);transform-origin:0 0;">6,533.06</span>
<div class="abs" style="left:657.00px;top:231.95px;width:173.00px;height:11.30px;background:#ededed"></div>
<span style="position:absolute;white-space:pre;left:660.00px;top:233.00px;font-size:8.38px;line-height:11px;color:#4a4846;letter-spacing:-0.22px;transform:scaleX(0.9587);transform-origin:0 0;">November</span>
<span class="n" style="position:absolute;white-space:pre;left:797.36px;top:233.00px;font-size:8.38px;line-height:11px;color:#4a4846;letter-spacing:-0.22px;transform:scaleX(0.9672);transform-origin:0 0;">2,066.30</span>
<span style="position:absolute;white-space:pre;left:660.00px;top:244.00px;font-size:8.38px;line-height:11px;color:#4a4846;letter-spacing:-0.22px;transform:scaleX(0.9649);transform-origin:0 0;">October</span>
<span class="n" style="position:absolute;white-space:pre;left:797.36px;top:244.00px;font-size:8.38px;line-height:11px;color:#4a4846;letter-spacing:-0.22px;transform:scaleX(0.9672);transform-origin:0 0;">6,761.40</span>
<div class="abs" style="left:657.00px;top:255.05px;width:173.00px;height:11.30px;background:#ededed"></div>
<span style="position:absolute;white-space:pre;left:660.00px;top:256.00px;font-size:8.38px;line-height:11px;color:#4a4846;letter-spacing:-0.22px;transform:scaleX(0.9615);transform-origin:0 0;">September</span>
<span class="n" style="position:absolute;white-space:pre;left:797.36px;top:256.00px;font-size:8.38px;line-height:11px;color:#4a4846;letter-spacing:-0.22px;transform:scaleX(0.9672);transform-origin:0 0;">4,302.79</span>
<span style="position:absolute;white-space:pre;left:660.00px;top:268.00px;font-size:8.38px;line-height:11px;font-weight:700;color:#252423;letter-spacing:-0.22px;transform:scaleX(0.9700);transform-origin:0 0;">Total</span>
<span class="n" style="position:absolute;white-space:pre;left:789.60px;top:268.00px;font-size:8.38px;line-height:11px;font-weight:700;color:#252423;letter-spacing:0.037px;">55,263.46</span>
<div class="abs" style="left:718.00px;top:127.60px;width:1.00px;height:150.00px;background:#74b9f7"></div>
<span style="position:absolute;white-space:pre;left:82.30px;top:267.00px;font-size:9.36px;line-height:12px;color:#252423;letter-spacing:0.054px;-webkit-text-stroke:.12px #252423;">Sum of UNIT_PRICE by</span>
<span style="position:absolute;white-space:pre;left:82.30px;top:278.00px;font-size:9.36px;line-height:12px;color:#252423;letter-spacing:-0.105px;-webkit-text-stroke:.12px #252423;">MONTH_NAME</span>
<div class="abs" style="left:138.30px;top:297px;width:1px;height:158px;background:repeating-linear-gradient(to bottom,#e2e2e2 0 1px,transparent 1px 3px)"></div>
<span style="position:absolute;white-space:pre;left:134.39px;top:456.00px;font-size:7.21px;line-height:9px;color:#777777;">0K</span>
<div class="abs" style="left:205.50px;top:297px;width:1px;height:158px;background:repeating-linear-gradient(to bottom,#e2e2e2 0 1px,transparent 1px 3px)"></div>
<span style="position:absolute;white-space:pre;left:199.59px;top:456.00px;font-size:7.21px;line-height:9px;color:#777777;">20K</span>
<div class="abs" style="left:138.40px;top:302.20px;width:82.60px;height:9.70px;background:#118dff"></div>
<span style="position:absolute;white-space:pre;left:107.47px;top:302.00px;font-size:7.21px;line-height:9px;color:#777777;">October</span>
<div class="abs" style="left:138.40px;top:314.61px;width:80.40px;height:9.70px;background:#118dff"></div>
<span style="position:absolute;white-space:pre;left:120.29px;top:315.00px;font-size:7.21px;line-height:9px;color:#777777;">July</span>
<div class="abs" style="left:138.40px;top:327.02px;width:60.40px;height:9.70px;background:#118dff"></div>
<span style="position:absolute;white-space:pre;left:99.87px;top:327.00px;font-size:7.21px;line-height:9px;color:#777777;">December</span>
<div class="abs" style="left:138.40px;top:339.43px;width:58.60px;height:9.70px;background:#118dff"></div>
<span style="position:absolute;white-space:pre;left:118.68px;top:339.00px;font-size:7.21px;line-height:9px;color:#777777;">April</span>
<div class="abs" style="left:138.40px;top:351.84px;width:58.10px;height:9.70px;background:#118dff"></div>
<span style="position:absolute;white-space:pre;left:119.49px;top:352.00px;font-size:7.21px;line-height:9px;color:#777777;">May</span>
<div class="abs" style="left:138.40px;top:364.25px;width:57.60px;height:9.70px;background:#118dff"></div>
<span style="position:absolute;white-space:pre;left:113.08px;top:364.00px;font-size:7.21px;line-height:9px;color:#777777;">March</span>
<div class="abs" style="left:138.40px;top:376.66px;width:57.30px;height:9.70px;background:#118dff"></div>
<span style="position:absolute;white-space:pre;left:97.85px;top:377.00px;font-size:7.21px;line-height:9px;color:#777777;">September</span>
<div class="abs" style="left:138.40px;top:389.07px;width:56.10px;height:9.70px;background:#118dff"></div>
<span style="position:absolute;white-space:pre;left:117.47px;top:389.00px;font-size:7.21px;line-height:9px;color:#777777;">June</span>
<div class="abs" style="left:138.40px;top:401.48px;width:51.60px;height:9.70px;background:#118dff"></div>
<span style="position:absolute;white-space:pre;left:110.66px;top:402.00px;font-size:7.21px;line-height:9px;color:#777777;">August</span>
<div class="abs" style="left:138.40px;top:413.89px;width:49.40px;height:9.70px;background:#118dff"></div>
<span style="position:absolute;white-space:pre;left:107.46px;top:414.00px;font-size:7.21px;line-height:9px;color:#777777;">January</span>
<div class="abs" style="left:138.40px;top:426.30px;width:48.60px;height:9.70px;background:#118dff"></div>
<span style="position:absolute;white-space:pre;left:99.87px;top:426.00px;font-size:7.21px;line-height:9px;color:#777777;">November</span>
<div class="abs" style="left:138.40px;top:438.71px;width:36.40px;height:9.70px;background:#118dff"></div>
<span style="position:absolute;white-space:pre;left:104.27px;top:439.00px;font-size:7.21px;line-height:9px;color:#777777;">February</span>
<div style="position:absolute;left:87.6px;top:375px;width:0;height:0;transform:rotate(-90deg)"><span style="position:absolute;white-space:pre;left:-28.00px;top:-6.00px;font-size:9.36px;line-height:12px;color:#252423;letter-spacing:-0.22px;transform:scaleX(0.8716);transform-origin:0 0;">MONTH_NAME</span></div>
<span style="position:absolute;white-space:pre;left:151.00px;top:465.00px;font-size:9.36px;line-height:12px;color:#252423;letter-spacing:-0.22px;transform:scaleX(0.9023);transform-origin:0 0;">Sum of UNIT_PRICE</span>
<span style="position:absolute;white-space:pre;left:275.50px;top:292.00px;font-size:9.36px;line-height:12px;color:#252423;letter-spacing:0.049px;-webkit-text-stroke:.12px #252423;">Sum of QUANTITY by MONTH_NAME</span>
<div class="abs" style="left:331.30px;top:311px;width:1px;height:169px;background:repeating-linear-gradient(to bottom,#e2e2e2 0 1px,transparent 1px 3px)"></div>
<span style="position:absolute;white-space:pre;left:329.79px;top:481.00px;font-size:7.21px;line-height:9px;color:#777777;">0</span>
<div class="abs" style="left:386.30px;top:311px;width:1px;height:169px;background:repeating-linear-gradient(to bottom,#e2e2e2 0 1px,transparent 1px 3px)"></div>
<span style="position:absolute;white-space:pre;left:382.79px;top:481.00px;font-size:7.21px;line-height:9px;color:#777777;">50</span>
<div class="abs" style="left:441.50px;top:311px;width:1px;height:169px;background:repeating-linear-gradient(to bottom,#e2e2e2 0 1px,transparent 1px 3px)"></div>
<span style="position:absolute;white-space:pre;left:435.98px;top:481.00px;font-size:7.21px;line-height:9px;color:#777777;">100</span>
<div class="abs" style="left:331.80px;top:316.50px;width:110.00px;height:10.00px;background:#118dff"></div>
<span style="position:absolute;white-space:pre;left:313.39px;top:317.00px;font-size:7.21px;line-height:9px;color:#777777;">July</span>
<div class="abs" style="left:331.80px;top:329.83px;width:102.20px;height:10.00px;background:#118dff"></div>
<span style="position:absolute;white-space:pre;left:300.57px;top:330.00px;font-size:7.21px;line-height:9px;color:#777777;">October</span>
<div class="abs" style="left:331.80px;top:343.16px;width:92.20px;height:10.00px;background:#118dff"></div>
<span style="position:absolute;white-space:pre;left:303.76px;top:343.00px;font-size:7.21px;line-height:9px;color:#777777;">August</span>
<div class="abs" style="left:331.80px;top:356.49px;width:84.40px;height:10.00px;background:#118dff"></div>
<span style="position:absolute;white-space:pre;left:292.97px;top:357.00px;font-size:7.21px;line-height:9px;color:#777777;">November</span>
<div class="abs" style="left:331.80px;top:369.82px;width:80.20px;height:10.00px;background:#118dff"></div>
<span style="position:absolute;white-space:pre;left:312.59px;top:370.00px;font-size:7.21px;line-height:9px;color:#777777;">May</span>
<div class="abs" style="left:331.80px;top:383.15px;width:78.00px;height:10.00px;background:#118dff"></div>
<span style="position:absolute;white-space:pre;left:311.78px;top:383.00px;font-size:7.21px;line-height:9px;color:#777777;">April</span>
<div class="abs" style="left:331.80px;top:396.48px;width:78.00px;height:10.00px;background:#118dff"></div>
<span style="position:absolute;white-space:pre;left:310.57px;top:397.00px;font-size:7.21px;line-height:9px;color:#777777;">June</span>
<div class="abs" style="left:331.80px;top:409.81px;width:77.00px;height:10.00px;background:#118dff"></div>
<span style="position:absolute;white-space:pre;left:306.18px;top:410.00px;font-size:7.21px;line-height:9px;color:#777777;">March</span>
<div class="abs" style="left:331.80px;top:423.14px;width:77.00px;height:10.00px;background:#118dff"></div>
<span style="position:absolute;white-space:pre;left:290.95px;top:423.00px;font-size:7.21px;line-height:9px;color:#777777;">September</span>
<div class="abs" style="left:331.80px;top:436.47px;width:73.70px;height:10.00px;background:#118dff"></div>
<span style="position:absolute;white-space:pre;left:292.97px;top:437.00px;font-size:7.21px;line-height:9px;color:#777777;">December</span>
<div class="abs" style="left:331.80px;top:449.80px;width:72.40px;height:10.00px;background:#118dff"></div>
<span style="position:absolute;white-space:pre;left:297.37px;top:450.00px;font-size:7.21px;line-height:9px;color:#777777;">February</span>
<div class="abs" style="left:331.80px;top:463.13px;width:68.20px;height:10.00px;background:#118dff"></div>
<span style="position:absolute;white-space:pre;left:300.56px;top:463.00px;font-size:7.21px;line-height:9px;color:#777777;">January</span>
<div style="position:absolute;left:280px;top:394.5px;width:0;height:0;transform:rotate(-90deg)"><span style="position:absolute;white-space:pre;left:-27.50px;top:-6.00px;font-size:9.36px;line-height:12px;color:#252423;letter-spacing:-0.22px;transform:scaleX(0.8560);transform-origin:0 0;">MONTH_NAME</span></div>
<span style="position:absolute;white-space:pre;left:352.50px;top:491.00px;font-size:9.36px;line-height:12px;color:#252423;letter-spacing:-0.22px;transform:scaleX(0.8997);transform-origin:0 0;">Sum of QUANTITY</span>
<span style="position:absolute;white-space:pre;left:504.30px;top:313.00px;font-size:9.36px;line-height:12px;color:#252423;letter-spacing:0.064px;-webkit-text-stroke:.12px #252423;">Sum of TAX_AMOUNT by MONTH_NAME</span>
<div class="abs" style="left:560.30px;top:331px;width:1px;height:126px;background:repeating-linear-gradient(to bottom,#e2e2e2 0 1px,transparent 1px 3px)"></div>
<span style="position:absolute;white-space:pre;left:556.39px;top:459.00px;font-size:7.21px;line-height:9px;color:#777777;">0K</span>
<div class="abs" style="left:639.00px;top:331px;width:1px;height:126px;background:repeating-linear-gradient(to bottom,#e2e2e2 0 1px,transparent 1px 3px)"></div>
<span style="position:absolute;white-space:pre;left:635.09px;top:459.00px;font-size:7.21px;line-height:9px;color:#777777;">2K</span>
<div class="abs" style="left:717.70px;top:331px;width:1px;height:126px;background:repeating-linear-gradient(to bottom,#e2e2e2 0 1px,transparent 1px 3px)"></div>
<span style="position:absolute;white-space:pre;left:713.79px;top:459.00px;font-size:7.21px;line-height:9px;color:#777777;">4K</span>
<div class="abs" style="left:796.50px;top:331px;width:1px;height:126px;background:repeating-linear-gradient(to bottom,#e2e2e2 0 1px,transparent 1px 3px)"></div>
<span style="position:absolute;white-space:pre;left:792.59px;top:459.00px;font-size:7.21px;line-height:9px;color:#777777;">6K</span>
<div class="abs" style="left:560.50px;top:336.50px;width:257.70px;height:10.00px;background:#118dff"></div>
<span style="position:absolute;white-space:pre;left:542.39px;top:337.00px;font-size:7.21px;line-height:9px;color:#777777;">July</span>
<div class="abs" style="left:560.50px;top:349.57px;width:214.30px;height:10.00px;background:#118dff"></div>
<span style="position:absolute;white-space:pre;left:529.58px;top:350.00px;font-size:7.21px;line-height:9px;color:#777777;">October</span>
<div class="abs" style="left:560.50px;top:362.64px;width:169.50px;height:10.00px;background:#118dff"></div>
<span style="position:absolute;white-space:pre;left:539.58px;top:363.00px;font-size:7.21px;line-height:9px;color:#777777;">June</span>
<div class="abs" style="left:560.50px;top:375.71px;width:164.00px;height:10.00px;background:#118dff"></div>
<span style="position:absolute;white-space:pre;left:519.95px;top:376.00px;font-size:7.21px;line-height:9px;color:#777777;">September</span>
<div class="abs" style="left:560.50px;top:388.78px;width:160.30px;height:10.00px;background:#118dff"></div>
<span style="position:absolute;white-space:pre;left:532.76px;top:389.00px;font-size:7.21px;line-height:9px;color:#777777;">August</span>
<div class="abs" style="left:560.50px;top:401.85px;width:157.00px;height:10.00px;background:#118dff"></div>
<span style="position:absolute;white-space:pre;left:540.78px;top:402.00px;font-size:7.21px;line-height:9px;color:#777777;">April</span>
<div class="abs" style="left:560.50px;top:414.92px;width:155.50px;height:10.00px;background:#118dff"></div>
<span style="position:absolute;white-space:pre;left:529.56px;top:415.00px;font-size:7.21px;line-height:9px;color:#777777;">January</span>
<div class="abs" style="left:560.50px;top:427.99px;width:153.00px;height:10.00px;background:#118dff"></div>
<span style="position:absolute;white-space:pre;left:521.97px;top:428.00px;font-size:7.21px;line-height:9px;color:#777777;">December</span>
<div class="abs" style="left:560.50px;top:441.06px;width:147.70px;height:10.00px;background:#118dff"></div>
<span style="position:absolute;white-space:pre;left:535.18px;top:441.00px;font-size:7.21px;line-height:9px;color:#777777;">March</span>
<div style="position:absolute;left:508.9px;top:393.7px;width:0;height:0;transform:rotate(-90deg)"><span style="position:absolute;white-space:pre;left:-28.00px;top:-6.00px;font-size:9.36px;line-height:12px;color:#252423;letter-spacing:-0.22px;transform:scaleX(0.8716);transform-origin:0 0;">MONTH_NAME</span></div>
<span style="position:absolute;white-space:pre;left:656.90px;top:468.00px;font-size:9.36px;line-height:12px;color:#252423;letter-spacing:-0.22px;transform:scaleX(0.9042);transform-origin:0 0;">Sum of TAX_AMOUNT</span>
<div class="abs" style="left:841.30px;top:332.00px;width:3.80px;height:124.00px;background:#e9e9e9;border-radius:2px"></div>
<div class="abs" style="left:841.20px;top:332.00px;width:3.80px;height:92.00px;background:#bababa;border-radius:2px"></div>
<div class="abs" style="left:72px;top:527px;width:776px;height:2px;background:repeating-linear-gradient(to right,#3a3836 0 2px,transparent 2px 4px)"></div>
<!-- p_filters -->
<svg style="left:863px;top:102.6px" width="13" height="10" viewBox="0 0 13 10" ><path d="M.7 .8 H12.3 M2.7 4.9 H10.3 M4.9 9 H8.1" stroke="#252423" stroke-width="1.55" stroke-linecap="round"/></svg>
<span style="position:absolute;white-space:pre;left:885.90px;top:99.00px;font-size:15.41px;line-height:20px;-webkit-text-stroke:0.54px #252423;color:#252423;letter-spacing:0.035px;">Filters</span>
<svg style="left:997.6px;top:104.2px" width="9.4" height="7" viewBox="0 0 9.4 7" ><path d="M.6 4.2 C1.6 1.8 3 .7 4.7 .7 C6.4 .7 7.8 1.8 8.8 4.2" fill="none" stroke="#424242" stroke-width="1"/><circle cx="4.7" cy="4.3" r="1.9" fill="#424242"/><circle cx="4.7" cy="4.3" r=".7" fill="#fff"/></svg>
<svg style="left:1028.5px;top:104.4px" width="8" height="8" viewBox="0 0 8 8" ><path d="M.8 .8 L3.8 4 L.8 7.2 M4.2 .8 L7.2 4 L4.2 7.2" fill="none" stroke="#424242" stroke-width="1.7" stroke-linejoin="miter"/></svg>
<div class="abs" style="left:857px;top:134.2px;width:180px;height:33.6px;background:#fff;border:1px solid #a8a8a8;border-radius:2px"></div>
<svg style="left:870px;top:145.5px" width="11" height="11" viewBox="0 0 11 11" ><circle cx="4.2" cy="4.2" r="3.5" fill="none" stroke="#424242" stroke-width="1.1"/><path d="M6.8 6.8 L10.2 10.2" stroke="#424242" stroke-width="1.2" stroke-linecap="round"/></svg>
<span style="position:absolute;white-space:pre;left:893.00px;top:143.00px;font-size:12.19px;line-height:16px;color:#3b3a39;letter-spacing:-0.004px;">Search</span>
<div class="abs" style="left:849px;top:172px;width:200px;height:1px;background:#c8c8c8"></div>
<span style="position:absolute;white-space:pre;left:857.40px;top:190.00px;font-size:12.19px;line-height:16px;color:#252423;letter-spacing:-0.164px;">Filters on this page</span>
<svg style="left:1027px;top:199.1px" width="8.4" height="2.2" viewBox="0 0 8.4 2.2" ><rect x=".2" y=".2" width="1.8" height="1.8" rx=".5" fill="#424242"/><rect x="3.3" y=".2" width="1.8" height="1.8" rx=".5" fill="#424242"/><rect x="6.4" y=".2" width="1.8" height="1.8" rx=".5" fill="#424242"/></svg>
<div class="abs" style="left:857px;top:214px;width:184px;height:45.5px;background:#fff;border:1px solid #bebcba;border-radius:2px"></div>
<span style="position:absolute;white-space:pre;left:896.15px;top:230.00px;font-size:12.19px;line-height:16px;color:#252423;letter-spacing:-0.116px;">Add data fields here</span>
<span style="position:absolute;white-space:pre;left:857.40px;top:287.00px;font-size:12.19px;line-height:16px;color:#252423;letter-spacing:-0.215px;">Filters on all pages</span>
<svg style="left:1027px;top:296.1px" width="8.4" height="2.2" viewBox="0 0 8.4 2.2" ><rect x=".2" y=".2" width="1.8" height="1.8" rx=".5" fill="#424242"/><rect x="3.3" y=".2" width="1.8" height="1.8" rx=".5" fill="#424242"/><rect x="6.4" y=".2" width="1.8" height="1.8" rx=".5" fill="#424242"/></svg>
<div class="abs" style="left:857px;top:311px;width:184px;height:45.5px;background:#fff;border:1px solid #bebcba;border-radius:2px"></div>
<span style="position:absolute;white-space:pre;left:896.15px;top:327.00px;font-size:12.19px;line-height:16px;color:#252423;letter-spacing:-0.116px;">Add data fields here</span>
<!-- p_vis -->
<span style="position:absolute;white-space:pre;left:1058.60px;top:99.00px;font-size:15.41px;line-height:20px;-webkit-text-stroke:0.54px #252423;color:#252423;letter-spacing:0.291px;">Visualizations</span>
<span style="position:absolute;white-space:pre;left:1058.50px;top:127.00px;font-size:11.99px;line-height:16px;-webkit-text-stroke:0.42px #252423;color:#252423;letter-spacing:0.031px;">Build visual</span>
<div class="abs" style="left:1058.2px;top:145.9px;width:31.7px;height:31.7px;background:#d2d0ce;border-radius:2px"></div>
<svg style="left:1062px;top:149.5px" width="25" height="25" viewBox="0 0 25 25" ><path d="M0 1 H19.2" stroke="#252423" stroke-width="1"/><rect x=".5" y="6" width="23.4" height="6.8" fill="#117865" stroke="#1b1a19" stroke-width="1" stroke-dasharray="1.6 1.2"/><rect x=".5" y="17" width="23.4" height="6.8" fill="#117865" stroke="#1b1a19" stroke-width="1" stroke-dasharray="1.6 1.2"/></svg>
<svg style="left:1128px;top:149.5px" width="24" height="24" viewBox="0 0 24 24" ><path d="M.8 22 V.8 H10.6 L16.8 7 V11 M10.6 .8 V7 H16.8" fill="none" stroke="#3b3a39" stroke-width="1.2" stroke-linejoin="round"/><path d="M23 8.4 L17.4 14 L20 16.4 L24.4 10.6 Z" fill="#3b3a39"/></svg>
<svg style="left:1050px;top:182px" width="180" height="10" viewBox="0 0 180 10" ><path d="M0 8.5 H17 L23.7 1.4 L30.4 8.5 H180" fill="none" stroke="#b3b0ad" stroke-width="1"/></svg>
<svg style="left:1060.8px;top:202px" width="18" height="18" viewBox="0 0 18 18" ><path d="M.6 0 V17.4 H18" fill="none" stroke="#3b3a39" stroke-width="1.1"/><rect x="0.6" y="2" width="5" height="4.4" fill="#fbfbfb" stroke="#3b3a39" stroke-width="1.0"/><rect x="5.6" y="2" width="6.4" height="4.4" fill="#7db9ec" stroke="#1571c7" stroke-width="1.0"/><rect x="0.6" y="10.4" width="7" height="4.4" fill="#fbfbfb" stroke="#3b3a39" stroke-width="1.0"/><rect x="7.6" y="10.4" width="8.4" height="4.4" fill="#c8c6c4" stroke="#979593" stroke-width="1.0"/></svg>
<svg style="left:1088.8px;top:202px" width="18" height="18" viewBox="0 0 18 18" ><path d="M.6 0 V17.4 H18" fill="none" stroke="#3b3a39" stroke-width="1.1"/><rect x="3.6" y="11.6" width="4" height="5.8" fill="#fbfbfb" stroke="#3b3a39" stroke-width="1.0"/><rect x="3.6" y="5" width="4" height="6.6" fill="#7db9ec" stroke="#1571c7" stroke-width="1.0"/><rect x="12" y="10.4" width="4" height="7" fill="#fbfbfb" stroke="#3b3a39" stroke-width="1.0"/><rect x="12" y="2" width="4" height="8.4" fill="#c8c6c4" stroke="#979593" stroke-width="1.0"/></svg>
<svg style="left:1116.8px;top:202px" width="18" height="18" viewBox="0 0 18 18" ><path d="M.8 0 V17.2 H18.4" fill="none" stroke="#3b3a39" stroke-width="1.7"/><rect x="0.8" y="1" width="17" height="3.6" fill="#7db9ec" stroke="#1571c7" stroke-width="1.2"/><rect x="0.8" y="5" width="10.4" height="3.4" fill="#fbfbfb" stroke="#3b3a39" stroke-width="1.3"/><rect x="0.8" y="8.6" width="7.4" height="3.4" fill="#c8c6c4" stroke="#979593" stroke-width="1.2"/><rect x="0.8" y="12.4" width="12.4" height="3.6" fill="#fbfbfb" stroke="#3b3a39" stroke-width="1.3"/></svg>
<svg style="left:1144.8px;top:202px" width="18" height="18" viewBox="0 0 18 18" ><path d="M.8 0 V17.2 H18.4" fill="none" stroke="#3b3a39" stroke-width="1.7"/><rect x="1.6" y="1" width="4.2" height="16.2" fill="#7db9ec" stroke="#1571c7" stroke-width="1.2"/><rect x="6" y="7.4" width="3.4" height="9.8" fill="#fbfbfb" stroke="#3b3a39" stroke-width="1.3"/><rect x="9.6" y="10" width="3.4" height="7.2" fill="#c8c6c4" stroke="#979593" stroke-width="1.2"/><rect x="13.2" y="5.4" width="4" height="11.8" fill="#fbfbfb" stroke="#3b3a39" stroke-width="1.3"/></svg>
<svg style="left:1172.8px;top:202px" width="18" height="18" viewBox="0 0 18 18" ><path d="M.6 0 V17.4 H18" fill="none" stroke="#3b3a39" stroke-width="1.1"/><rect x="0.6" y="2" width="3.6" height="4.4" fill="#fbfbfb" stroke="#3b3a39" stroke-width="1.0"/><rect x="4.2" y="2" width="11.8" height="4.4" fill="#7db9ec" stroke="#1571c7" stroke-width="1.0"/><rect x="0.6" y="10.4" width="10" height="4.4" fill="#fbfbfb" stroke="#3b3a39" stroke-width="1.0"/><rect x="10.6" y="10.4" width="5.4" height="4.4" fill="#c8c6c4" stroke="#979593" stroke-width="1.0"/></svg>
<svg style="left:1200.8px;top:202px" width="18" height="18" viewBox="0 0 18 18" ><path d="M.6 0 V17.4 H18" fill="none" stroke="#3b3a39" stroke-width="1.1"/><rect x="3.6" y="13.4" width="4" height="4" fill="#fbfbfb" stroke="#3b3a39" stroke-width="1.0"/><rect x="3.6" y="2" width="4" height="11.4" fill="#7db9ec" stroke="#1571c7" stroke-width="1.0"/><rect x="12" y="7.6" width="4" height="9.8" fill="#fbfbfb" stroke="#3b3a39" stroke-width="1.0"/><rect x="12" y="2" width="4" height="5.6" fill="#c8c6c4" stroke="#979593" stroke-width="1.0"/></svg>
<svg style="left:1060.8px;top:230px" width="18" height="18" viewBox="0 0 18 18" ><path d="M.6 0 V17.4 H18" fill="none" stroke="#3b3a39" stroke-width="1.1"/><path d="M1 15.6 L11.2 3.6 L17.2 9.6" fill="none" stroke="#1571c7" stroke-width="1.1"/><path d="M.8 13.6 L6 5.2 L11.2 10 L17.6 3.4" fill="none" stroke="#3b3a39" stroke-width="1.2"/></svg>
<svg style="left:1088.8px;top:230px" width="18" height="18" viewBox="0 0 18 18" ><path d="M10.2 6.4 L13.6 .8 L17.4 6.4 V17.4 Z" fill="#c8c6c4" stroke="#979593" stroke-width=".9"/><path d="M.6 12 L6 1.6 L12 10 L8 17 Z" fill="#fbfbfb" stroke="#3b3a39" stroke-width="1.1" stroke-linejoin="round"/><path d="M.6 12 L4.2 15 L10.2 6.6 L17.6 17.4 H.6 Z" fill="#7db9ec" stroke="#1571c7" stroke-width="1.1" stroke-linejoin="round"/></svg>
<svg style="left:1116.8px;top:230px" width="18" height="18" viewBox="0 0 18 18" ><path d="M.6 3 L6 10 L12 2.2 L17.6 5.2 V13.8 L12 8.2 L6 15 L.6 9 Z" fill="#7db9ec"/><path d="M.6 3 L6 10 L12 2.2 L17.6 5.2 M.6 9 L6 15 L12 8.2 L17.6 13.8" fill="none" stroke="#1571c7" stroke-width="1.1"/><path d="M.6 0 V17.4 H18" fill="none" stroke="#3b3a39" stroke-width="1.1"/></svg>
<svg style="left:1144.8px;top:230px" width="18" height="18" viewBox="0 0 18 18" ><path d="M.6 2 H17.6 V14 L11.6 8.6 L5.6 15 L.6 10 Z" fill="#7db9ec"/><path d="M.6 2 H17.6 M.6 10 L5.6 15 L11.6 8.6 L17.6 14" fill="none" stroke="#1571c7" stroke-width="1.1"/><path d="M.6 0 V17.4 H18" fill="none" stroke="#3b3a39" stroke-width="1.1"/></svg>
<svg style="left:1172.8px;top:230px" width="18" height="18" viewBox="0 0 18 18" ><path d="M.6 0 V17.4 H18" fill="none" stroke="#3b3a39" stroke-width="1.1"/><rect x="3.6" y="13.4" width="4" height="4" fill="#fbfbfb" stroke="#3b3a39" stroke-width="1.0"/><rect x="3.6" y="2" width="4" height="11.4" fill="#7db9ec" stroke="#1571c7" stroke-width="1.0"/><rect x="12" y="8" width="4" height="9.4" fill="#fbfbfb" stroke="#3b3a39" stroke-width="1.0"/><rect x="12" y="2.4" width="4" height="5.6" fill="#c8c6c4" stroke="#979593" stroke-width="1.0"/><path d="M.8 16.6 L6 10.4 L10.6 14.6 L17.8 7.8" fill="none" stroke="#3b3a39" stroke-width="1.3"/></svg>
<svg style="left:1200.8px;top:230px" width="18" height="18" viewBox="0 0 18 18" ><path d="M.6 0 V17.4 H18" fill="none" stroke="#3b3a39" stroke-width="1.1"/><rect x="7.6" y="1.6" width="4" height="15.8" fill="#fbfbfb" stroke="#3b3a39" stroke-width="1.0"/><rect x="3.6" y="8.4" width="4" height="9" fill="#7db9ec" stroke="#1571c7" stroke-width="1.0"/><rect x="12.4" y="5.4" width="3.6" height="12" fill="#c8c6c4" stroke="#979593" stroke-width="1.0"/><path d="M.8 16 L6.4 10 L11 14 L17.8 7.8" fill="none" stroke="#3b3a39" stroke-width="1.3"/></svg>
<svg style="left:1060.8px;top:258px" width="18" height="18" viewBox="0 0 18 18" ><path d="M2.4 3.4 C5 3 6.6 6.4 9.6 6.4 C12.4 6.4 14 3 16.8 2.6 V7 C14 7.4 12.4 10 9.6 10 C6.6 10 5 7.2 2.4 7.6 Z" fill="#c8c6c4" stroke="#979593" stroke-width=".8"/><rect x="2.4" y="11.4" width="14.4" height="3.6" fill="#e8901c"/><rect x="7.4" y="9" width="4.4" height="3" fill="#e8901c"/><path d="M2.4 7.6 C5 7.4 6.6 11.4 9.6 11.4 C12.4 11.4 14 7.4 16.8 7 V10.6 C14 11 12.4 15 9.6 15 C6.6 15 5 11 2.4 11.2 Z" fill="#7db9ec" stroke="#1571c7" stroke-width="1"/><path d="M.6 0 V17.4 H18" fill="none" stroke="#3b3a39" stroke-width="1.1"/></svg>
<svg style="left:1088.8px;top:258px" width="18" height="18" viewBox="0 0 18 18" ><path d="M.6 0 V17.4 H18" fill="none" stroke="#3b3a39" stroke-width="1.1"/><path d="M2.8 17.4 V5.4 H6 V17.4 M6 5.4 H9.6 V10.4 H10.6 M13 10.4 V1.6 H16.8 V17.4 M9.6 10.4 V17.4" fill="none" stroke="#3b3a39" stroke-width="1.1"/><rect x="10.6" y="1.6" width="2.4" height="8.8" fill="#7db9ec" stroke="#1571c7" stroke-width="1.0"/></svg>
<svg style="left:1116.8px;top:258px" width="18" height="18" viewBox="0 0 18 18" ><rect x="0.6" y="1.2" width="17" height="4.6" fill="#7db9ec" stroke="#1571c7" stroke-width="1.1"/><rect x="2.8" y="5.8" width="12.6" height="5.2" fill="#7db9ec" stroke="#1571c7" stroke-width="1.1"/><rect x="5.6" y="11" width="7" height="5.2" fill="#7db9ec" stroke="#1571c7" stroke-width="1.1"/></svg>
<svg style="left:1144.8px;top:258px" width="18" height="18" viewBox="0 0 18 18" ><path d="M.6 0 V17.4 H18" fill="none" stroke="#3b3a39" stroke-width="1.1"/><rect x="3" y="4" width="2.6" height="2.6" fill="#7db9ec"/><rect x="8" y="7.6" width="2.6" height="2.6" fill="#7db9ec"/><rect x="13" y="11.6" width="2.6" height="2.6" fill="#7db9ec"/><rect x="13.2" y="1.2" width="2.6" height="2.6" fill="#252423"/><rect x="3" y="12.6" width="2.6" height="2.6" fill="#252423"/></svg>
<svg style="left:1172.8px;top:258px" width="18" height="18" viewBox="0 0 18 18" ><circle cx="9" cy="9" r="8.3" fill="#fbfbfb" stroke="#3b3a39" stroke-width="1.1"/><path d="M9 .7 A8.3 8.3 0 0 1 15.2 14.6 L9 8.4 Z" fill="#7db9ec" stroke="#1571c7" stroke-width="1.1" stroke-linejoin="round"/></svg>
<svg style="left:1200.8px;top:258px" width="18" height="18" viewBox="0 0 18 18" ><path d="M9 .7 A8.3 8.3 0 1 1 .9 7.4 L5.6 8.4 A3.5 3.5 0 1 0 9 5.5 Z" fill="#7db9ec" stroke="#1571c7" stroke-width="1.1" stroke-linejoin="round"/><path d="M.9 7.4 A8.3 8.3 0 0 1 9 .7 V5.5 A3.5 3.5 0 0 0 5.6 8.4 Z" fill="#fbfbfb" stroke="#979593" stroke-width="1" stroke-linejoin="round"/></svg>
<svg style="left:1060.8px;top:286px" width="18" height="18" viewBox="0 0 18 18" ><rect x="0.6" y="0.6" width="8.4" height="8.6" fill="#7db9ec" stroke="#1571c7" stroke-width="1.1"/><rect x="0.6" y="9.2" width="8.4" height="8.2" fill="#7db9ec" stroke="#1571c7" stroke-width="1.1"/><rect x="9" y="0.6" width="8.4" height="5.6" fill="#fbfbfb" stroke="#3b3a39" stroke-width="1.1"/><rect x="9" y="6.2" width="4.4" height="11.2" fill="#fbfbfb" stroke="#3b3a39" stroke-width="1.1"/><rect x="13.4" y="6.2" width="4" height="5.6" fill="#fbfbfb" stroke="#3b3a39" stroke-width="1.1"/><rect x="13.4" y="11.8" width="4" height="5.6" fill="#fbfbfb" stroke="#3b3a39" stroke-width="1.1"/></svg>
<svg style="left:1088.8px;top:286px" width="18" height="18" viewBox="0 0 18 18" ><circle cx="9.6" cy="7.8" r="6.2" fill="#fbfbfb" stroke="#3b3a39" stroke-width="1.1"/><path d="M7.2 3.4 C9 2.4 11.6 2.6 12.8 4 C13.4 5.4 12 6.4 10.4 6.6 C9 7 8.6 8.4 7.4 8 C6.2 7.2 6.2 4.6 7.2 3.4Z M10 9.6 C11.4 9 13 9.6 13.4 10.6 C12.8 12 11 12.6 9.6 12 C9.2 11.2 9.4 10.2 10 9.6Z" fill="#2f9a48"/><path d="M6.4 1.2 C2 3.4 1.2 10 5 13.6 C7 15.2 10 15.6 12.6 14.4 M9.6 15 V17 M5 17.4 H14" fill="none" stroke="#3b3a39" stroke-width="1.1"/></svg>
<svg style="left:1116.8px;top:286px" width="18" height="18" viewBox="0 0 18 18" ><path d="M6.4 2.4 L9 3.2 L12.4 1.6 L17.5 1.6 V8.2 L8.6 8.5 Z" fill="#c8c6c4" stroke="#3b3a39" stroke-width="1" stroke-linejoin="round"/><path d="M.8 8.8 L8.4 8.5 L9 16.2 L6.4 15 L3.6 13.6 L1.4 11 Z" fill="#c8c6c4" stroke="#3b3a39" stroke-width="1" stroke-linejoin="round"/><path d="M.5 1.5 L5 1.2 L6.4 2.4 C7 4.6 7.2 6.4 8.4 8.5 L.8 8.8 C1.8 6.6 .5 4 .5 1.5Z" fill="#7db9ec" stroke="#1571c7" stroke-width="1" stroke-linejoin="round"/><path d="M10 9.6 C12.4 9 15 9 17.5 8.2 C17.6 11 16 13 14 13.6 L12.6 15 L11.4 14.2 L9.2 15.8 C9.8 13.6 9 11.6 10 9.6Z" fill="#7db9ec" stroke="#1571c7" stroke-width="1" stroke-linejoin="round"/></svg>
<svg style="left:1144.8px;top:286px" width="18" height="18" viewBox="0 0 18 18" ><path d="M11.6 .2 L16.6 18 L11.2 13 L.8 16.4 Z" fill="#2f95dc"/><path d="M11.6 .2 L16.6 18 L11.2 13 Z" fill="#1673c4"/></svg>
<svg style="left:1172.8px;top:286px" width="18" height="18" viewBox="0 0 18 18" ><path d="M.8 13 A8.2 8.2 0 0 1 17.2 13 H13.4 A4.4 4.4 0 0 0 4.6 13 Z" fill="#fbfbfb" stroke="#3b3a39" stroke-width="1.1" stroke-linejoin="round"/><path d="M5.4 5.6 A8.2 8.2 0 0 1 17.2 13 H13.4 A4.4 4.4 0 0 0 7.2 9 Z" fill="#7db9ec" stroke="#1571c7" stroke-width="1.1" stroke-linejoin="round"/><path d="M9 13 L12 9" stroke="#3b3a39" stroke-width="1.6" stroke-linecap="round"/></svg>
<svg style="left:1200.8px;top:286px" width="18" height="18" viewBox="0 0 18 18" ><rect x="0.6" y="1.8" width="16.8" height="14" fill="#fbfbfb" stroke="#3b3a39" stroke-width="1.1"/><path d="M3.4 9.6 L5.8 5.2 L8.2 9.6 Z" fill="#d6f0d8" stroke="#2f9a48" stroke-width=".9"/><path d="M10 5.2 H15 L12.5 9.6 Z" fill="#f6c0c4" stroke="#d13438" stroke-width=".9"/><path d="M3.2 12.8 H15" stroke="#979593" stroke-width="1"/></svg>
<svg style="left:1060.8px;top:314px" width="18" height="18" viewBox="0 0 18 18" ><path d="M.6 1 H17 V9 M10.4 17.4 H.6 V1 M.6 3.6 H17" fill="none" stroke="#3b3a39" stroke-width="1.1"/><rect x="3.4" y="6.6" width="3" height="3" fill="#c8c6c4" stroke="#979593" stroke-width=".8"/><rect x="3.4" y="11.8" width="3" height="3" fill="#c8c6c4" stroke="#979593" stroke-width=".8"/><path d="M9.6 9.6 H18.6 L15.4 13.4 V17.8 H12.8 V13.4 Z" fill="#fbfbfb" stroke="#3b3a39" stroke-width="1.1" stroke-linejoin="round"/></svg>
<svg style="left:1088.8px;top:314px" width="18" height="18" viewBox="0 0 18 18" ><rect x="0.6" y="1" width="16.8" height="16.4" fill="#fbfbfb" stroke="#3b3a39" stroke-width="1.0"/><path d="M.6 3.4 H17.4 M.6 8.1 H17.4 M.6 12.8 H17.4 M6.2 3.4 V17.4 M11.8 3.4 V17.4" stroke="#3b3a39" stroke-width=".9"/><rect x=".6" y="1" width="16.8" height="2.2" fill="#8a8886"/></svg>
<svg style="left:1116.8px;top:314px" width="18" height="18" viewBox="0 0 18 18" ><rect x="11.8" y="3.6" width="5.6" height="13.8" fill="#7db9ec"/><rect x=".6" y="12.8" width="16.8" height="4.6" fill="#7db9ec"/><rect x="0.6" y="1" width="16.8" height="16.4" fill="none" stroke="#3b3a39" stroke-width="1.1"/><path d="M.6 3.6 H17.4 M.6 8.2 H17.4 M.6 12.8 H17.4 M6.2 3.6 V17.4 M11.8 3.6 V17.4" stroke="#3b3a39" stroke-width="1.1"/><path d="M11.8 8.2 H17.4 M11.8 12.8 H17.4 M11.8 3.6 V17.4 M6.2 12.8 V17.4 M.6 12.8 H17.4" stroke="#1571c7" stroke-width="1"/><rect x=".6" y="1" width="16.8" height="2.2" fill="#8a8886"/></svg>
<svg style="left:1144.8px;top:314px" width="18" height="18" viewBox="0 0 18 18" ><path d="M.6 0 V17.4 H18" fill="none" stroke="#3b3a39" stroke-width="1.1"/><path d="M.6 3.6 H13.4" stroke="#1571c7" stroke-width="1.1"/><circle cx="15" cy="3.6" r="1.9" fill="#7db9ec" stroke="#1571c7" stroke-width="1"/><path d="M.6 8.6 H9.4 M.6 13 H5.6" stroke="#3b3a39" stroke-width="1"/><rect x="9.6" y="7.4" width="2.4" height="2.4" fill="#c8c6c4" stroke="#3b3a39" stroke-width=".8"/><rect x="5.6" y="11.8" width="2.4" height="2.4" fill="#c8c6c4" stroke="#3b3a39" stroke-width=".8"/></svg>
<svg style="left:1172.8px;top:314px" width="18" height="18" viewBox="0 0 18 18" ><path d="M6.6 9 H9.8 M12 3 H9.8 V15.4 H12 M9.8 9 H12" fill="none" stroke="#3b3a39" stroke-width="1.2"/><rect x="0.8" y="7" width="5.8" height="4" fill="#7db9ec" stroke="#1571c7" stroke-width="1.1"/><rect x="12" y="1" width="5.6" height="3.8" fill="#7db9ec" stroke="#1571c7" stroke-width="1.1"/><rect x="12" y="7.1" width="5.6" height="3.8" fill="#7db9ec" stroke="#1571c7" stroke-width="1.1"/><rect x="12" y="13.4" width="5.6" height="3.8" fill="#7db9ec" stroke="#1571c7" stroke-width="1.1"/></svg>
<svg style="left:1200.8px;top:314px" width="18" height="18" viewBox="0 0 18 18" ><path d="M.8 2 H17.2 V12.4 H6.6 L3.4 16.8 V12.4 H.8 Z" fill="#fbfbfb" stroke="#1571c7" stroke-width="1.3" stroke-linejoin="round"/></svg>
<svg style="left:1060.8px;top:342px" width="18" height="18" viewBox="0 0 18 18" ><path d="M2.4 .8 H11.4 L15.6 5 V17.4 H2.4 Z M11.4 .8 V5 H15.6" fill="#fbfbfb" stroke="#3b3a39" stroke-width="1.1" stroke-linejoin="round"/><rect x="1.4" y="5.6" width="3" height="3" fill="#7db9ec" stroke="#1571c7" stroke-width="1"/><path d="M6.4 7.2 H12.6 M5.4 11.6 H11" stroke="#1571c7" stroke-width="1.1"/></svg>
<svg style="left:1088.8px;top:342px" width="18" height="18" viewBox="0 0 18 18" ><path d="M4.2 2 H13.8 V7.4 A4.8 4.8 0 0 1 4.2 7.4 Z M4.2 3.6 H1 C1 7 2.4 8.6 4.6 9 M13.8 3.6 H17 C17 7 15.6 8.6 13.4 9 M9 12.2 V15.4 M7.8 12.2 C8 13.8 7.2 15 6 15.6 M10.2 12.2 C10 13.8 10.8 15 12 15.6" fill="#fbfbfb" stroke="#3b3a39" stroke-width="1.1" stroke-linejoin="round"/><path d="M4 1.8 H14" stroke="#1571c7" stroke-width="1.6"/><rect x="4.8" y="15.4" width="8.4" height="2" fill="#7db9ec" stroke="#1571c7" stroke-width="1"/></svg>
<svg style="left:1116.8px;top:342px" width="18" height="18" viewBox="0 0 18 18" ><path d="M2.2 .8 H11.4 L15.8 5.2 V17.4 H2.2 Z" fill="#d6d4d2" stroke="#3b3a39" stroke-width="1.1" stroke-linejoin="round"/><path d="M11.4 .8 V5.2 H15.8" fill="#fbfbfb" stroke="#3b3a39" stroke-width="1.1" stroke-linejoin="round"/><path d="M5.2 15.4 V11.6 M8.6 15.4 V13.2 M12.2 15.4 V9" stroke="#3b3a39" stroke-width="2"/></svg>
<svg style="left:1144.8px;top:342px" width="18" height="18" viewBox="0 0 18 18" ><rect x="10.4" y="1.4" width="6.4" height="6.4" fill="#fbfbfb" stroke="#979593" stroke-width="1"/><rect x="1" y="10.4" width="6.8" height="6.6" fill="#fbfbfb" stroke="#979593" stroke-width="1"/><rect x="4.6" y="5" width="3.4" height="3.4" fill="#7db9ec" stroke="#1571c7" stroke-width=".8"/><path d="M9.4 10.4 H18.4 L15.2 14 V18 H12.6 V14 Z" fill="#fbfbfb" stroke="#3b3a39" stroke-width="1.1" stroke-linejoin="round"/><path d="M3.2 0 H8.4 L6.2 4.4 H8.6 L1.6 12.4 L3.4 6.6 H.6 Z" fill="#f2a23c" stroke="#d6791a" stroke-width=".7" stroke-linejoin="round"/></svg>
<svg style="left:1172.8px;top:342px" width="18" height="18" viewBox="0 0 18 18" ><path d="M8 1.6 H17 V9.4 M11 17 H1 V11" fill="none" stroke="#3b3a39" stroke-width="1.1"/><path d="M9.4 5.4 H14.6" stroke="#3b3a39" stroke-width="1"/><path d="M6.4 12 H9.6" stroke="#3b3a39" stroke-width="1" stroke-dasharray="1 1"/><rect x="3.6" y="10.8" width="2.2" height="2.2" fill="#fbfbfb" stroke="#3b3a39" stroke-width=".8"/><path d="M9.4 10.4 H18.4 L15.2 14 V18 H12.6 V14 Z" fill="#fbfbfb" stroke="#3b3a39" stroke-width="1.1" stroke-linejoin="round"/><path d="M3.2 0 H8.4 L6.2 4.4 H8.6 L1.6 12.4 L3.4 6.6 H.6 Z" fill="#f2a23c" stroke="#d6791a" stroke-width=".7" stroke-linejoin="round"/></svg>
<svg style="left:1200.8px;top:342px" width="18" height="18" viewBox="0 0 18 18" ><rect x="0.6" y="2.6" width="16.8" height="13.2" fill="#fbfbfb" stroke="#3b3a39" stroke-width="1.1"/><path d="M1.2 11.4 L5.8 6.6 L11.6 12.8 L13.4 10.8 L16.8 14 V15.2 H1.2 Z" fill="#7db9ec" stroke="#1571c7" stroke-width="1" stroke-linejoin="round"/><circle cx="13.6" cy="5.8" r="1.3" fill="#e8901c"/></svg>
<svg style="left:1060.8px;top:370px" width="18" height="18" viewBox="0 0 18 18" ><rect x="0.6" y="1.4" width="16.8" height="15.6" fill="#fbfbfb" stroke="#3b3a39" stroke-width="1.1"/><path d="M.6 4.4 H17.4" stroke="#3b3a39" stroke-width="1.1"/><path d="M5.4 8.4 L2.8 10.8 L5.4 13.2 M12.6 8.4 L15.2 10.8 L12.6 13.2 M10.2 8 L7.8 13.6" fill="none" stroke="#1571c7" stroke-width="1.1"/></svg>
<svg style="left:1088.8px;top:370px" width="18" height="18" viewBox="0 0 18 18" ><path d="M5.6 1.4 H17 V10 M13 17.4 H1 V8" fill="none" stroke="#1571c7" stroke-width="1.3"/><path d="M16 3 C13 4.6 14 7.6 11.6 9 C9.4 10.4 9.6 13 7.4 14.2 C6 15 5 16 4.6 17 L9.6 17 C10 15.4 11.6 14.6 12.6 13 C13.6 11.4 13 9.6 14.6 8.4 L16.2 7 Z" fill="#7db9ec" stroke="#1571c7" stroke-width=".8"/><path d="M.2 1.6 A2.4 2.4 0 0 1 5 1.6 V4.6 L2.6 8.2 L.2 4.6 Z" fill="#e07a10"/><circle cx="2.6" cy="2.4" r=".9" fill="#fbfbfb"/><rect x="15.4" y="9.6" width="2.8" height="2.8" fill="#e07a10"/><circle cx="15.2" cy="16" r="2.2" fill="#e07a10"/></svg>
<svg style="left:1116.8px;top:370px" width="18" height="18" viewBox="0 0 18 18" ><g fill="none" stroke="#a43fb0" stroke-width="1.2" stroke-linejoin="round"><path d="M6.6 1.4 L.8 9 L6.6 16.6 L12.4 9 Z"/><path d="M11.4 1.4 L17.2 9 L11.4 16.6 L5.6 9 Z"/><path d="M9 4.6 L12.4 9 L9 13.4"/></g></svg>
<svg style="left:1144.8px;top:370px" width="18" height="18" viewBox="0 0 18 18" ><path d="M.8 2 H11 L17.4 9 L11 16 H.8 L7.2 9 Z" fill="#fbfbfb" stroke="#1571c7" stroke-width="1.2" stroke-linejoin="round"/><path d="M3.6 16 L10 9 M7.6 16 L14 9 L7.6 2" fill="none" stroke="#1571c7" stroke-width="1.1"/></svg>
<svg style="left:1172.8px;top:370px" width="18" height="18" viewBox="0 0 18 18" ><circle cx="5" cy="9" r="1.05" fill="#0f4c8a"/><circle cx="9" cy="9" r="1.05" fill="#0f4c8a"/><circle cx="13" cy="9" r="1.05" fill="#0f4c8a"/></svg>
<div class="abs" style="left:1103.8px;top:162.5px;width:121.6px;height:33.6px;background:#fff;border-radius:4px;box-shadow:0 2px 8px rgba(0,0,0,.16),0 0 2px rgba(0,0,0,.12)"></div>
<svg style="left:1225px;top:173.2px" width="7" height="12" viewBox="0 0 7 12" ><path d="M0 0 L6.4 6 L0 12 Z" fill="#fff"/></svg>
<span style="position:absolute;white-space:pre;left:1112.20px;top:172.00px;font-size:12.19px;line-height:16px;color:#767676;letter-spacing:-0.22px;transform:scaleX(0.9736);transform-origin:0 0;">Name</span>
<span style="position:absolute;white-space:pre;left:1155.40px;top:172.00px;font-size:12.19px;line-height:16px;color:#505050;letter-spacing:-0.22px;transform:scaleX(0.9134);transform-origin:0 0;">CUSTOMER</span>
<div class="abs" style="left:1055.5px;top:395.5px;width:169px;height:0;border-top:1px dashed #c8c6c4"></div>
<div class="abs" style="left:1050px;top:406px;width:180px;height:1px;background:#dedede"></div>
<span style="position:absolute;white-space:pre;left:1062.50px;top:416.00px;font-size:12.19px;line-height:16px;color:#252423;letter-spacing:-0.22px;transform:scaleX(0.9528);transform-origin:0 0;">Values</span>
<div class="abs" style="left:1054.5px;top:438px;width:170px;height:26.4px;background:#fff;border:1px dashed #c8c6c4"></div>
<span style="position:absolute;white-space:pre;left:1065.00px;top:444.00px;font-size:12.67px;line-height:16px;color:#252423;letter-spacing:-0.22px;transform:scaleX(0.9854);transform-origin:0 0;">Add data fields here</span>
<span style="position:absolute;white-space:pre;left:1062.50px;top:476.00px;font-size:12.67px;line-height:16px;-webkit-text-stroke:0.44px #252423;color:#252423;letter-spacing:0.090px;">Drill through</span>
<span style="position:absolute;white-space:pre;left:1062.50px;top:501.00px;font-size:12.67px;line-height:16px;color:#252423;letter-spacing:-0.22px;transform:scaleX(0.9751);transform-origin:0 0;">Cross-report</span>
<div class="abs" style="left:1176px;top:502px;width:31.8px;height:14.8px;background:#fff;border:1px solid #605e5c;border-radius:8px"></div>
<div class="abs" style="left:1180.8px;top:505.6px;width:7.6px;height:7.6px;background:#605e5c;border-radius:50%"></div>
<span style="position:absolute;white-space:pre;left:1190.20px;top:504.00px;font-size:9.26px;line-height:12px;color:#605e5c;letter-spacing:0.409px;">Off</span>
<span style="position:absolute;white-space:pre;left:1062.50px;top:528.00px;font-size:12.67px;line-height:16px;color:#252423;letter-spacing:-0.22px;transform:scaleX(0.9713);transform-origin:0 0;">Keep all filters</span>
<div class="abs" style="left:1176px;top:528.7px;width:31.8px;height:15.4px;background:#117865;border-radius:8px"></div>
<div class="abs" style="left:1195.2px;top:532.4px;width:8px;height:8px;background:#fff;border-radius:50%"></div>
<span style="position:absolute;white-space:pre;left:1181.20px;top:531.00px;font-size:9.26px;line-height:12px;font-weight:700;color:#fff;letter-spacing:-0.22px;transform:scaleX(0.9340);transform-origin:0 0;">On</span>
<div class="abs" style="left:1054.5px;top:554.2px;width:170px;height:25px;background:#fff;border:1px dashed #c8c6c4"></div>
<span style="position:absolute;white-space:pre;left:1063.20px;top:560.00px;font-size:12.67px;line-height:16px;color:#252423;letter-spacing:-0.144px;">Add drill-through fields here</span>
<!-- p_data -->
<span style="position:absolute;white-space:pre;left:1239.80px;top:99.00px;font-size:15.41px;line-height:20px;-webkit-text-stroke:0.54px #252423;color:#252423;letter-spacing:-0.037px;">Data</span>
<svg style="left:1469px;top:104.4px" width="8" height="8" viewBox="0 0 8 8" ><path d="M.8 .8 L3.8 4 L.8 7.2 M4.2 .8 L7.2 4 L4.2 7.2" fill="none" stroke="#424242" stroke-width="1.7"/></svg>
<svg style="left:1211.5px;top:104.4px" width="8" height="8" viewBox="0 0 8 8" ><path d="M.8 .8 L3.8 4 L.8 7.2 M4.2 .8 L7.2 4 L4.2 7.2" fill="none" stroke="#424242" stroke-width="1.7"/></svg>
<div class="abs" style="left:1235.5px;top:134.5px;width:247.5px;height:23.5px;background:#fff;border:1px solid #c6c6c6;border-bottom-color:#7a7a7a;border-radius:4px"></div>
<svg style="left:1246.5px;top:138.5px" width="15" height="15" viewBox="0 0 15 15" ><circle cx="6.4" cy="6.4" r="5.4" fill="none" stroke="#555" stroke-width="1.1"/><path d="M10.4 10.4 L14.2 14.2" stroke="#555" stroke-width="1.2" stroke-linecap="round"/></svg>
<span style="position:absolute;white-space:pre;left:1269.20px;top:138.00px;font-size:13.65px;line-height:18px;color:#616161;letter-spacing:-0.22px;transform:scaleX(0.9686);transform-origin:0 0;">Search</span>
<div class="abs" style="left:1236px;top:167px;width:246px;height:24px;background:#e6e6e6;border-radius:4px"></div>
<div class="abs" style="left:1236px;top:167px;width:4.2px;height:24px;background:#c4c4c4;border-radius:4px 0 0 4px"></div>
<svg style="left:1246.3px;top:177px" width="8" height="5" viewBox="0 0 8 5" ><path d="M.7 .7 L4 4 L7.3 .7" fill="none" stroke="#424242" stroke-width="1" stroke-linecap="round" stroke-linejoin="round"/></svg>
<svg style="left:1260.2px;top:173.4px" width="12" height="12" viewBox="0 0 12 12" ><g fill="none" stroke="#2b2b2b" stroke-width="1.3"><rect x=".65" y=".65" width="10.7" height="10.7" rx="2.2"/><path d="M.6 4.2 H11.4 M.6 7.8 H11.4 M4.2 .6 V11.4 M7.8 .6 V11.4"/></g></svg>
<span style="position:absolute;white-space:pre;left:1278.50px;top:172.00px;font-size:12.19px;line-height:16px;color:#252423;letter-spacing:-0.22px;transform:scaleX(0.8853);transform-origin:0 0;">CUSTOMER</span>
<svg style="left:1470.2px;top:178.3px" width="8.4" height="2.2" viewBox="0 0 8.4 2.2" ><rect x=".2" y=".2" width="1.7" height="1.7" rx=".5" fill="#605e5c"/><rect x="3.3" y=".2" width="1.7" height="1.7" rx=".5" fill="#605e5c"/><rect x="6.4" y=".2" width="1.7" height="1.7" rx=".5" fill="#605e5c"/></svg>
<div class="abs" style="left:1275px;top:197px;width:12px;height:12px;border:1px solid #8a8886;border-radius:2px;background:#fbfbfb"></div>
<span style="position:absolute;white-space:pre;left:1313.50px;top:196.00px;font-size:12.19px;line-height:16px;color:#252423;letter-spacing:-0.22px;transform:scaleX(0.8686);transform-origin:0 0;">BIRTH_DATE</span>
<div class="abs" style="left:1275px;top:221px;width:12px;height:12px;border:1px solid #8a8886;border-radius:2px;background:#fbfbfb"></div>
<span style="position:absolute;white-space:pre;left:1313.50px;top:220.00px;font-size:12.19px;line-height:16px;color:#252423;letter-spacing:-0.22px;transform:scaleX(0.8924);transform-origin:0 0;">CHURNED_CUSTOMERS</span>
<div class="abs" style="left:1275px;top:245px;width:12px;height:12px;border:1px solid #8a8886;border-radius:2px;background:#fbfbfb"></div>
<span style="position:absolute;white-space:pre;left:1313.50px;top:244.00px;font-size:12.19px;line-height:16px;color:#252423;letter-spacing:-0.22px;transform:scaleX(0.8704);transform-origin:0 0;">CITY</span>
<div class="abs" style="left:1275px;top:269px;width:12px;height:12px;border:1px solid #8a8886;border-radius:2px;background:#fbfbfb"></div>
<span style="position:absolute;white-space:pre;left:1313.50px;top:268.00px;font-size:12.19px;line-height:16px;color:#252423;letter-spacing:-0.22px;transform:scaleX(0.8524);transform-origin:0 0;">CITY_SK</span>
<div class="abs" style="left:1275px;top:293px;width:12px;height:12px;border:1px solid #8a8886;border-radius:2px;background:#fbfbfb"></div>
<span style="position:absolute;white-space:pre;left:1313.50px;top:292.00px;font-size:12.19px;line-height:16px;color:#252423;letter-spacing:-0.22px;transform:scaleX(0.8990);transform-origin:0 0;">COUNTRY</span>
<div class="abs" style="left:1275px;top:317px;width:12px;height:12px;border:1px solid #8a8886;border-radius:2px;background:#fbfbfb"></div>
<span style="position:absolute;white-space:pre;left:1313.50px;top:316.00px;font-size:12.19px;line-height:16px;color:#252423;letter-spacing:-0.22px;transform:scaleX(0.8963);transform-origin:0 0;">CUSTOMER_NK</span>
<div class="abs" style="left:1275px;top:341px;width:12px;height:12px;border:1px solid #8a8886;border-radius:2px;background:#fbfbfb"></div>
<span style="position:absolute;white-space:pre;left:1313.50px;top:340.00px;font-size:12.19px;line-height:16px;color:#252423;letter-spacing:-0.22px;transform:scaleX(0.8764);transform-origin:0 0;">CUSTOMER_SK</span>
<div class="abs" style="left:1275px;top:365px;width:12px;height:12px;border:1px solid #8a8886;border-radius:2px;background:#fbfbfb"></div>
<span style="position:absolute;white-space:pre;left:1313.50px;top:364.00px;font-size:12.19px;line-height:16px;color:#252423;letter-spacing:-0.22px;transform:scaleX(0.8786);transform-origin:0 0;">CUSTOMER_STATUS</span>
<div class="abs" style="left:1275px;top:389px;width:12px;height:12px;border:1px solid #8a8886;border-radius:2px;background:#fbfbfb"></div>
<span style="position:absolute;white-space:pre;left:1313.50px;top:388.00px;font-size:12.19px;line-height:16px;color:#252423;letter-spacing:-0.22px;transform:scaleX(0.8670);transform-origin:0 0;">DISTRICT_SK</span>
<div class="abs" style="left:1275px;top:413px;width:12px;height:12px;border:1px solid #8a8886;border-radius:2px;background:#fbfbfb"></div>
<span style="position:absolute;white-space:pre;left:1313.50px;top:412.00px;font-size:12.19px;line-height:16px;color:#252423;letter-spacing:-0.22px;transform:scaleX(0.8572);transform-origin:0 0;">EFFECTIVE_FROM</span>
<div class="abs" style="left:1275px;top:437px;width:12px;height:12px;border:1px solid #8a8886;border-radius:2px;background:#fbfbfb"></div>
<span style="position:absolute;white-space:pre;left:1313.50px;top:436.00px;font-size:12.19px;line-height:16px;color:#252423;letter-spacing:-0.22px;transform:scaleX(0.8351);transform-origin:0 0;">EFFECTIVE_TO</span>
<div class="abs" style="left:1275px;top:461px;width:12px;height:12px;border:1px solid #8a8886;border-radius:2px;background:#fbfbfb"></div>
<span style="position:absolute;white-space:pre;left:1313.50px;top:460.00px;font-size:12.19px;line-height:16px;color:#252423;letter-spacing:-0.22px;transform:scaleX(0.9189);transform-origin:0 0;">EMAIL</span>
<div class="abs" style="left:1275px;top:485px;width:12px;height:12px;border:1px solid #8a8886;border-radius:2px;background:#fbfbfb"></div>
<span style="position:absolute;white-space:pre;left:1313.50px;top:484.00px;font-size:12.19px;line-height:16px;color:#252423;letter-spacing:-0.22px;transform:scaleX(0.8906);transform-origin:0 0;">FIRST_NAME</span>
<div class="abs" style="left:1275px;top:509px;width:12px;height:12px;border:1px solid #8a8886;border-radius:2px;background:#fbfbfb"></div>
<span style="position:absolute;white-space:pre;left:1313.50px;top:508.00px;font-size:12.19px;line-height:16px;color:#252423;letter-spacing:-0.22px;transform:scaleX(0.8669);transform-origin:0 0;">IS_CURRENT</span>
<div class="abs" style="left:1275px;top:533px;width:12px;height:12px;border:1px solid #8a8886;border-radius:2px;background:#fbfbfb"></div>
<span style="position:absolute;white-space:pre;left:1313.50px;top:532.00px;font-size:12.19px;line-height:16px;color:#252423;letter-spacing:-0.22px;transform:scaleX(0.9163);transform-origin:0 0;">LAST_NAME</span>
<div class="abs" style="left:1275px;top:557px;width:12px;height:12px;border:1px solid #8a8886;border-radius:2px;background:#fbfbfb"></div>
<span style="position:absolute;white-space:pre;left:1313.50px;top:556.00px;font-size:12.19px;line-height:16px;color:#252423;letter-spacing:-0.22px;transform:scaleX(0.8719);transform-origin:0 0;">STATE_PROVINCE</span>
<svg style="left:1248px;top:583.2px" width="5" height="8" viewBox="0 0 5 8" ><path d="M.7 .7 L4 4 L.7 7.3" fill="none" stroke="#424242" stroke-width="1" stroke-linecap="round" stroke-linejoin="round"/></svg>
<svg style="left:1260.2px;top:581.2px" width="12" height="12" viewBox="0 0 12 12" ><g fill="none" stroke="#2b2b2b" stroke-width="1.3"><rect x=".65" y=".65" width="10.7" height="10.7" rx="2.2"/><path d="M.6 4.2 H11.4 M.6 7.8 H11.4 M4.2 .6 V11.4 M7.8 .6 V11.4"/></g></svg>
<span style="position:absolute;white-space:pre;left:1278.50px;top:580.00px;font-size:12.19px;line-height:16px;color:#252423;letter-spacing:-0.22px;transform:scaleX(0.8786);transform-origin:0 0;">DATE</span>
<svg style="left:1248px;top:607.2px" width="5" height="8" viewBox="0 0 5 8" ><path d="M.7 .7 L4 4 L.7 7.3" fill="none" stroke="#424242" stroke-width="1" stroke-linecap="round" stroke-linejoin="round"/></svg>
<svg style="left:1260.2px;top:605.2px" width="12" height="12" viewBox="0 0 12 12" ><g fill="none" stroke="#2b2b2b" stroke-width="1.3"><rect x=".65" y=".65" width="10.7" height="10.7" rx="2.2"/><path d="M.6 4.2 H11.4 M.6 7.8 H11.4 M4.2 .6 V11.4 M7.8 .6 V11.4"/></g></svg>
<span style="position:absolute;white-space:pre;left:1278.50px;top:604.00px;font-size:12.19px;line-height:16px;color:#252423;letter-spacing:-0.22px;transform:scaleX(0.8396);transform-origin:0 0;">FACT_SALES</span>
<!-- p_bottom -->
<svg style="left:79px;top:657px" width="24" height="24" viewBox="0 0 24 24" ><rect x="3.6" y=".6" width="17.2" height="12" rx="2.4" fill="#117865"/><path d="M1.8 14.4 H22.6" stroke="#117865" stroke-width="1.2" stroke-linecap="round"/><path d="M1.6 21.4 H22.4" stroke="#117865" stroke-width="3" stroke-linecap="round"/></svg>
<svg style="left:129px;top:655.5px" width="12" height="20" viewBox="0 0 12 20" ><rect x=".7" y=".7" width="10.4" height="18.4" rx="2" fill="none" stroke="#424242" stroke-width="1.3"/><path d="M4.6 16 H7.4" stroke="#424242" stroke-width="1.2" stroke-linecap="round"/></svg>
<svg style="left:162.6px;top:663px" width="6" height="8" viewBox="0 0 6 8" ><path d="M5 .8 L.8 4 L5 7.2 Z" fill="none" stroke="#b8b8b8" stroke-width=".9" stroke-linejoin="round"/></svg>
<svg style="left:183.6px;top:663px" width="6" height="8" viewBox="0 0 6 8" ><path d="M1 .8 L5.2 4 L1 7.2 Z" fill="none" stroke="#b8b8b8" stroke-width=".9" stroke-linejoin="round"/></svg>
<div class="abs" style="left:196.5px;top:648.5px;width:76.3px;height:35.5px;background:#fff;border-left:1px solid #3b3a39;border-bottom:3.6px solid #117865"></div>
<span style="position:absolute;white-space:pre;left:217.70px;top:660.00px;font-size:12.29px;line-height:16px;color:#252423;letter-spacing:-0.22px;transform:scaleX(0.8905);transform-origin:0 0;-webkit-text-stroke:.25px #252423;">Page 1</span>
<div class="abs" style="left:272.8px;top:648.8px;width:39px;height:35.2px;background:#117865"></div>
<svg style="left:286.6px;top:659.9px" width="12" height="12" viewBox="0 0 12 12" ><path d="M6 .3 V11.7 M.3 6 H11.7" stroke="#fff" stroke-width="2.2"/></svg>
<span style="position:absolute;white-space:pre;left:73.30px;top:690.00px;font-size:12.19px;line-height:16px;color:#424242;letter-spacing:-0.22px;transform:scaleX(0.9712);transform-origin:0 0;">Page 1 of 1</span>
<span style="position:absolute;white-space:pre;left:1275.80px;top:689.00px;font-size:12.67px;line-height:16px;font-weight:700;color:#323130;">-</span>
<div class="abs" style="left:1284px;top:696.2px;width:99.6px;height:1px;background:#605e5c"></div>
<div class="abs" style="left:1311.4px;top:691px;width:3.6px;height:11px;background:#605e5c"></div>
<div class="abs" style="left:1334.3px;top:694px;width:1px;height:5.4px;background:#605e5c"></div>
<svg style="left:1389.6px;top:692.6px" width="8" height="8" viewBox="0 0 8 8" ><path d="M4 .4 V7.6 M.4 4 H7.6" stroke="#323130" stroke-width="1.1"/></svg>
<span style="position:absolute;white-space:pre;left:1411.00px;top:689.00px;font-size:12.19px;line-height:16px;color:#323130;letter-spacing:-0.22px;transform:scaleX(0.9433);transform-origin:0 0;">61%</span>
<svg style="left:1454.6px;top:692.4px" width="14" height="9.4" viewBox="0 0 14 9.4" ><rect x=".6" y=".6" width="12.6" height="8.2" rx="1.2" fill="none" stroke="#424242" stroke-width="1.1"/><path d="M5 2.6 H3 V6.8 H5 M8.8 2.6 H10.8 V6.8 H8.8" fill="none" stroke="#424242" stroke-width="1"/></svg>
<svg style="left:1481px;top:702px" width="7" height="7" viewBox="0 0 7 7"><path d="M7 0 V7 H0 C4.4 7 7 4.4 7 0 Z" fill="#7a4226"/></svg>
<svg style="left:0;top:702px" width="7" height="7" viewBox="0 0 7 7"><path d="M0 0 V7 H7 C2.6 7 0 4.4 0 0 Z" fill="#9c9c9c"/></svg>
</body></html>
